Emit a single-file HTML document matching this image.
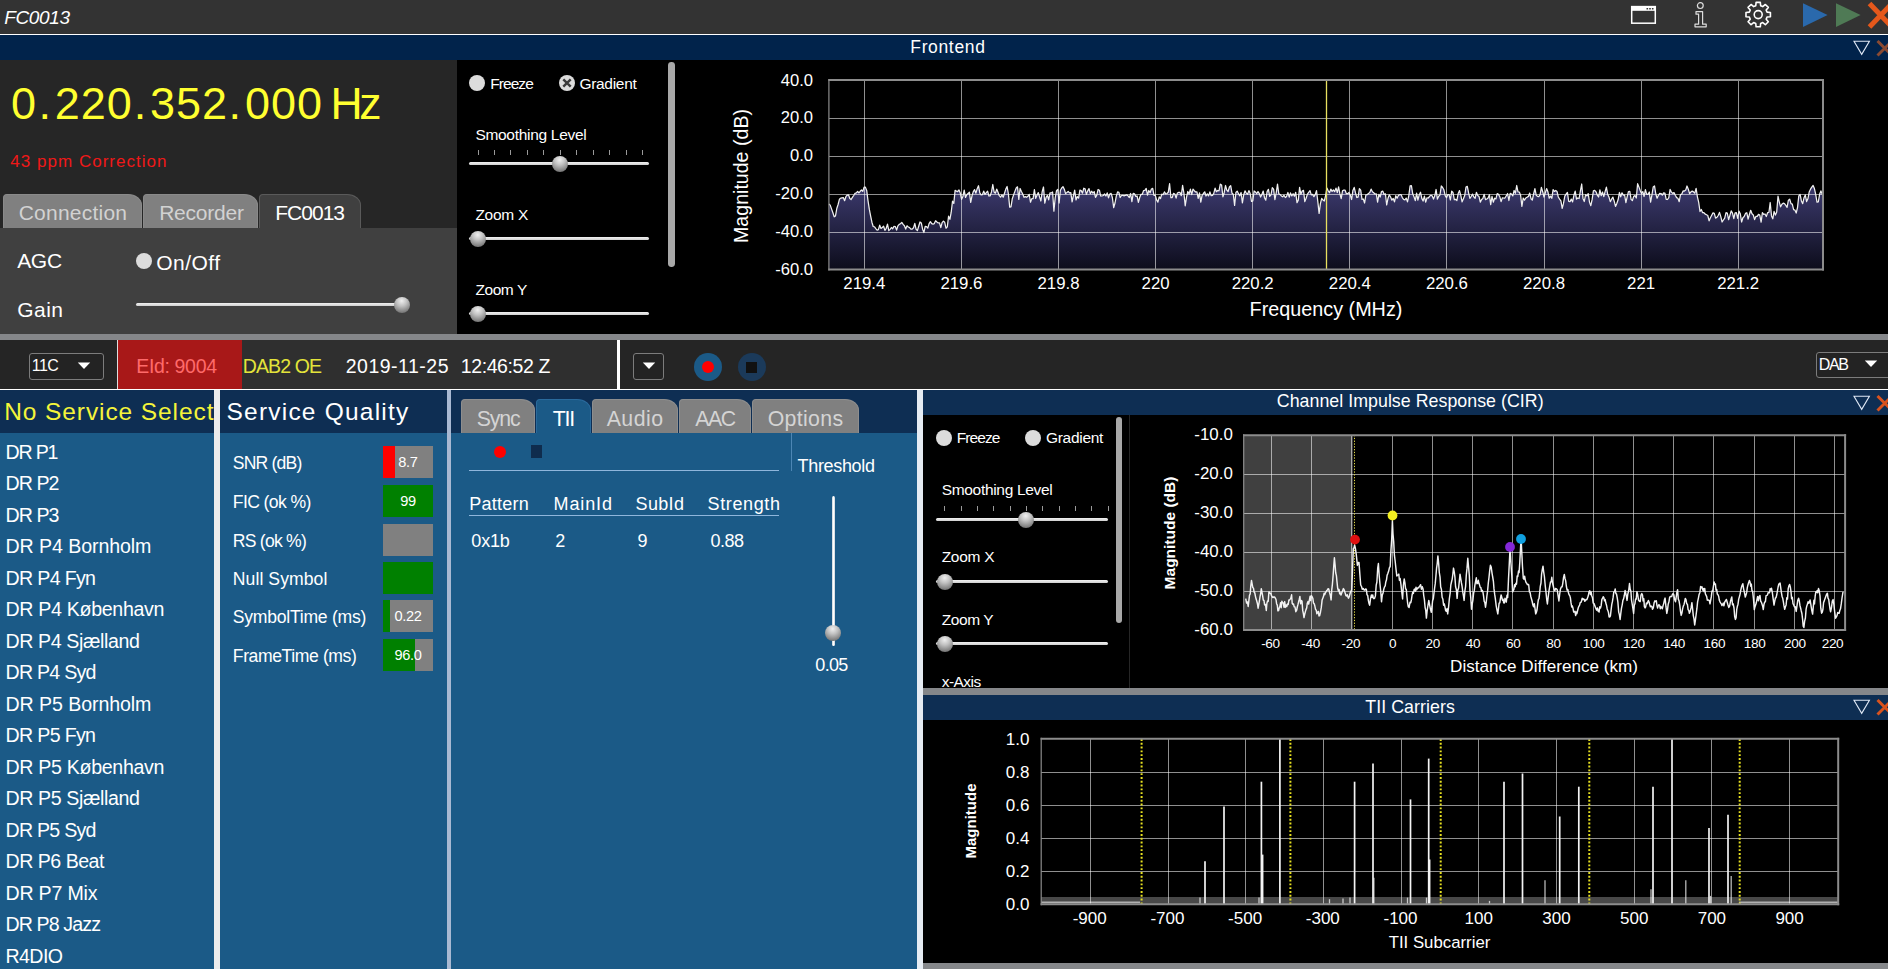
<!DOCTYPE html>
<html lang="en"><head><meta charset="utf-8"><title>FC0013</title><style>
html,body{margin:0;padding:0;background:#000;}
#app{position:relative;width:1888px;height:969px;overflow:hidden;background:#000;font-family:"Liberation Sans", Arial, sans-serif;}
.r{position:absolute;display:block}
.t{position:absolute;white-space:pre;font-family:"Liberation Sans", Arial, sans-serif;}
.th{position:absolute;border-radius:50%;background:radial-gradient(circle at 48% 24%,#efefef 0%,#c2c2c2 35%,#808080 75%,#585858 100%);}
.rd{position:absolute;border-radius:50%;background:#dcdcdc;}
</style></head><body><div id="app">
<div class="r" style="left:0px;top:0px;width:1888px;height:34px;background:#333;"></div>
<div class="r" style="left:0px;top:33.5px;width:1888px;height:1.5px;background:#fff;"></div>
<div class="t" style="left:4.24px;top:7.00px;font-size:19.00px;line-height:21px;color:#fff;letter-spacing:-0.377px;font-style:italic;">FC0013</div>
<svg class="r" style="left:1625px;top:0" width="263" height="34" viewBox="1625 0 263 34">
<rect x="1631.7" y="6.6" width="23.6" height="16.6" fill="none" stroke="#fff" stroke-width="1.5"/>
<rect x="1631.7" y="6.6" width="23.6" height="4.2" fill="#fff"/>
<rect x="1646.5" y="8" width="1.6" height="1.5" fill="#333"/><rect x="1649.2" y="8" width="1.6" height="1.5" fill="#333"/><rect x="1651.9" y="8" width="1.6" height="1.5" fill="#333"/>
<circle cx="1700.3" cy="5.6" r="2.9" fill="none" stroke="#ddd" stroke-width="1.2"/>
<path d="M1696 11.6h6.6v12.6h3.6v2.6h-11.2v-2.6h3.6v-10h-2.6z" fill="none" stroke="#ddd" stroke-width="1.2" stroke-linejoin="round"/>
<g transform="translate(1758.2 14.6)" fill="none" stroke="#fff" stroke-width="1.6" stroke-linejoin="round">
<path d="M8.87 -2.45L12.22 -2.10L12.22 2.10L8.87 2.45L8.00 4.53L10.13 7.16L7.16 10.13L4.53 8.00L2.45 8.87L2.10 12.22L-2.10 12.22L-2.45 8.87L-4.53 8.00L-7.16 10.13L-10.13 7.16L-8.00 4.53L-8.87 2.45L-12.22 2.10L-12.22 -2.10L-8.87 -2.45L-8.00 -4.53L-10.13 -7.16L-7.16 -10.13L-4.53 -8.00L-2.45 -8.87L-2.10 -12.22L2.10 -12.22L2.45 -8.87L4.53 -8.00L7.16 -10.13L10.13 -7.16L8.00 -4.53Z"/><circle r="4"/></g>
<path d="M1803 3.2L1827.6 15L1803 27z" fill="#2a69ac"/>
<path d="M1836 3.2L1860.6 15L1836 27z" fill="#4f7a55"/>
<path d="M1869.5 3.5L1892 27M1892 3.5L1869.5 27" stroke="#e5581b" stroke-width="5" fill="none"/>
</svg>
<div class="r" style="left:0px;top:35px;width:1888px;height:25px;background:#01234b;"></div>
<div class="t" style="left:910.30px;top:37.00px;font-size:17.50px;line-height:20px;color:#fff;letter-spacing:0.647px;">Frontend</div>
<svg class="r" style="left:1850px;top:39.6px" width="38" height="20" viewBox="0 0 38 20"><path d="M4 1.2H19.4L11.7 14.4Z" fill="none" stroke="#dfe8f5" stroke-width="1.1"/><path d="M27.5 1L42 15.5M42 1L27.5 15.5" stroke="#8a4a32" stroke-width="3" fill="none"/></svg>
<div class="r" style="left:0px;top:60px;width:457px;height:167.5px;background:#262626;"></div>
<div class="r" style="left:0px;top:227.5px;width:457px;height:106px;background:#404040;"></div>
<div class="t" style="left:11.10px;top:78.00px;font-size:45.00px;line-height:51px;color:#ffff30;letter-spacing:0.972px;">0</div>
<div class="t" style="left:38.50px;top:78.00px;font-size:45.00px;line-height:51px;color:#ffff30;letter-spacing:0.000px;">.</div>
<div class="t" style="left:54.70px;top:78.00px;font-size:45.00px;line-height:51px;color:#ffff30;letter-spacing:0.972px;">220</div>
<div class="t" style="left:133.80px;top:78.00px;font-size:45.00px;line-height:51px;color:#ffff30;letter-spacing:0.000px;">.</div>
<div class="t" style="left:150.00px;top:78.00px;font-size:45.00px;line-height:51px;color:#ffff30;letter-spacing:0.972px;">352</div>
<div class="t" style="left:228.50px;top:78.00px;font-size:45.00px;line-height:51px;color:#ffff30;letter-spacing:0.000px;">.</div>
<div class="t" style="left:245.00px;top:78.00px;font-size:45.00px;line-height:51px;color:#ffff30;letter-spacing:0.972px;">000</div>
<div class="t" style="left:330.42px;top:79.00px;font-size:44.50px;line-height:49px;color:#ffff30;letter-spacing:-3.182px;">Hz</div>
<div class="t" style="left:10.32px;top:152.00px;font-size:17.00px;line-height:19px;color:#f01818;letter-spacing:1.024px;">43 ppm Correction</div>
<div class="r" style="left:3px;top:194px;width:139px;height:33.5px;background:#808080;border-radius:4px 14px 0 0 / 4px 11px 0 0;border:1px solid #8a8a8a;border-bottom:none;box-sizing:border-box"></div>
<div class="t" style="left:18.66px;top:201.00px;font-size:21.00px;line-height:23px;color:#d2d2d2;letter-spacing:0.238px;">Connection</div>
<div class="r" style="left:143px;top:194px;width:115px;height:33.5px;background:#808080;border-radius:4px 14px 0 0 / 4px 11px 0 0;border:1px solid #8a8a8a;border-bottom:none;box-sizing:border-box"></div>
<div class="t" style="left:159.16px;top:201.00px;font-size:21.00px;line-height:23px;color:#d2d2d2;letter-spacing:-0.212px;">Recorder</div>
<div class="r" style="left:259px;top:194px;width:102px;height:34px;background:#404040;border-radius:4px 14px 0 0 / 4px 11px 0 0;border:1px solid #5a5a5a;border-bottom:none;box-sizing:border-box"></div>
<div class="t" style="left:275.16px;top:201.00px;font-size:21.00px;line-height:23px;color:#fff;letter-spacing:-0.964px;">FC0013</div>
<div class="t" style="left:17.16px;top:249.00px;font-size:21.00px;line-height:23px;color:#fff;letter-spacing:-0.309px;">AGC</div>
<div class="rd" style="left:136px;top:252.5px;width:16px;height:16px"></div>
<div class="t" style="left:156.16px;top:251.00px;font-size:21.00px;line-height:23px;color:#fff;letter-spacing:0.484px;">On/Off</div>
<div class="t" style="left:17.16px;top:298.00px;font-size:21.00px;line-height:23px;color:#fff;letter-spacing:0.510px;">Gain</div>
<div class="r" style="left:136px;top:303px;width:266px;height:3px;background:linear-gradient(#f2f2f2,#cfcfcf);border-radius:1.5px;"></div>
<div class="th" style="left:394px;top:297px;width:16px;height:16px"></div>
<div class="r" style="left:457px;top:60px;width:1431px;height:274px;background:#000;"></div>
<div class="rd" style="left:469.4px;top:75px;width:16px;height:16px"></div>
<div class="t" style="left:490.18px;top:75.00px;font-size:15.50px;line-height:17px;color:#fff;letter-spacing:-0.930px;">Freeze</div>
<div class="rd" style="left:558.5px;top:75px;width:16px;height:16px"></div>
<svg class="r" style="left:558.5px;top:75px" width="16" height="16" viewBox="0 0 16 16"><path d="M4.3 4.3L11.7 11.7M11.7 4.3L4.3 11.7" stroke="#3a3a3a" stroke-width="2.4" fill="none"/></svg>
<div class="t" style="left:579.38px;top:75.00px;font-size:15.50px;line-height:17px;color:#fff;letter-spacing:-0.294px;">Gradient</div>
<div class="t" style="left:475.38px;top:126.00px;font-size:15.50px;line-height:17px;color:#fff;letter-spacing:-0.291px;">Smoothing Level</div>
<div class="r" style="left:477.5px;top:150px;width:1px;height:5px;background:#9a9a9a;"></div>
<div class="r" style="left:493.5px;top:150px;width:1px;height:5px;background:#9a9a9a;"></div>
<div class="r" style="left:509.5px;top:150px;width:1px;height:5px;background:#9a9a9a;"></div>
<div class="r" style="left:526.5px;top:150px;width:1px;height:5px;background:#9a9a9a;"></div>
<div class="r" style="left:542.5px;top:150px;width:1px;height:5px;background:#9a9a9a;"></div>
<div class="r" style="left:559.5px;top:150px;width:1px;height:5px;background:#9a9a9a;"></div>
<div class="r" style="left:575.5px;top:150px;width:1px;height:5px;background:#9a9a9a;"></div>
<div class="r" style="left:592.5px;top:150px;width:1px;height:5px;background:#9a9a9a;"></div>
<div class="r" style="left:608.5px;top:150px;width:1px;height:5px;background:#9a9a9a;"></div>
<div class="r" style="left:625.5px;top:150px;width:1px;height:5px;background:#9a9a9a;"></div>
<div class="r" style="left:641.5px;top:150px;width:1px;height:5px;background:#9a9a9a;"></div>
<div class="r" style="left:469px;top:162.3px;width:179.5px;height:3px;background:linear-gradient(#f2f2f2,#cfcfcf);border-radius:1.5px;"></div>
<div class="th" style="left:552px;top:156.3px;width:16px;height:16px"></div>
<div class="t" style="left:475.38px;top:206.00px;font-size:15.50px;line-height:17px;color:#fff;letter-spacing:-0.274px;">Zoom X</div>
<div class="r" style="left:469px;top:237px;width:179.5px;height:3px;background:linear-gradient(#f2f2f2,#cfcfcf);border-radius:1.5px;"></div>
<div class="th" style="left:470px;top:231px;width:16px;height:16px"></div>
<div class="t" style="left:475.38px;top:281.00px;font-size:15.50px;line-height:17px;color:#fff;letter-spacing:-0.418px;">Zoom Y</div>
<div class="r" style="left:469px;top:312.3px;width:179.5px;height:3px;background:linear-gradient(#f2f2f2,#cfcfcf);border-radius:1.5px;"></div>
<div class="th" style="left:470px;top:306.3px;width:16px;height:16px"></div>
<div class="r" style="left:668px;top:61.5px;width:6.7px;height:205.5px;background:#a8a8a8;border-radius:3.4px;"></div>
<svg class="r" style="left:457px;top:60px" width="1431" height="274" viewBox="457 60 1431 274">
<defs><linearGradient id="g1" x1="0" y1="0" x2="0" y2="1"><stop offset="0" stop-color="#3d3b70"/><stop offset="1" stop-color="#0d0d1c"/></linearGradient></defs>
<polygon points="829,269 829.0,203.8 830.3,205.4 831.6,209.1 832.9,212.7 834.2,216.8 835.5,215.9 836.8,208.5 838.1,204.5 839.4,199.3 840.7,198.1 842.0,197.8 843.3,197.6 844.6,200.7 845.9,196.7 847.2,195.1 848.5,194.8 849.8,198.5 851.1,199.5 852.4,197.4 853.7,195.5 855.0,193.3 856.3,192.9 857.6,191.5 858.9,192.8 860.2,191.3 861.5,190.0 862.8,191.4 864.1,187.1 865.4,187.2 866.7,190.4 868.0,200.6 869.3,209.2 870.6,215.8 871.9,222.2 873.2,226.5 874.5,226.8 875.8,228.6 877.1,230.2 878.4,229.6 879.7,225.2 881.0,228.4 882.3,227.5 883.6,226.2 884.9,230.4 886.2,228.3 887.5,224.2 888.8,230.6 890.1,229.4 891.4,227.5 892.7,228.8 894.0,226.4 895.3,226.5 896.6,230.1 897.9,225.9 899.2,224.4 900.5,223.8 901.8,222.4 903.1,224.4 904.4,225.8 905.7,229.1 907.0,225.8 908.3,227.0 909.6,227.6 910.9,229.2 912.2,229.1 913.5,227.8 914.8,223.3 916.1,229.3 917.4,230.6 918.7,226.2 920.0,222.0 921.3,223.0 922.6,229.2 923.9,232.5 925.2,226.4 926.5,226.6 927.8,228.2 929.1,223.7 930.4,221.7 931.7,223.7 933.0,224.2 934.3,223.6 935.6,220.7 936.9,222.0 938.2,222.9 939.5,222.9 940.8,227.6 942.1,222.7 943.4,221.1 944.7,222.3 946.0,228.2 947.3,226.9 948.6,216.2 949.9,219.3 951.2,212.2 952.5,201.2 953.8,203.4 955.1,190.3 956.4,191.2 957.7,191.7 959.0,189.9 960.3,193.0 961.6,199.3 962.9,196.6 964.2,190.1 965.5,197.4 966.8,194.8 968.1,193.5 969.4,192.2 970.7,202.4 972.0,195.8 973.3,191.6 974.6,189.6 975.9,193.2 977.2,188.7 978.5,185.7 979.8,192.9 981.1,194.9 982.4,194.7 983.7,191.1 985.0,194.4 986.3,192.6 987.6,191.2 988.9,196.0 990.2,195.8 991.5,191.9 992.8,184.5 994.1,192.0 995.4,193.2 996.7,189.1 998.0,192.3 999.3,195.7 1000.6,197.2 1001.9,194.9 1003.2,197.2 1004.5,193.2 1005.8,189.1 1007.1,186.5 1008.4,194.0 1009.7,207.1 1011.0,206.9 1012.3,198.7 1013.6,194.9 1014.9,191.4 1016.2,188.0 1017.5,186.8 1018.8,199.4 1020.1,188.5 1021.4,191.4 1022.7,194.1 1024.0,197.3 1025.3,196.6 1026.6,197.3 1027.9,196.3 1029.2,194.3 1030.5,202.2 1031.8,198.6 1033.1,198.6 1034.4,189.6 1035.7,198.3 1037.0,195.3 1038.3,192.6 1039.6,197.0 1040.9,201.0 1042.2,191.7 1043.5,187.0 1044.8,203.2 1046.1,197.3 1047.4,195.4 1048.7,199.8 1050.0,192.9 1051.3,192.9 1052.6,192.0 1053.9,211.1 1055.2,198.0 1056.5,190.8 1057.8,189.4 1059.1,203.0 1060.4,190.3 1061.7,188.0 1063.0,186.6 1064.3,189.2 1065.6,193.6 1066.9,192.6 1068.2,191.5 1069.5,192.9 1070.8,192.6 1072.1,201.8 1073.4,195.7 1074.7,190.1 1076.0,199.9 1077.3,196.6 1078.6,198.1 1079.9,190.1 1081.2,190.6 1082.5,193.2 1083.8,188.2 1085.1,188.8 1086.4,194.3 1087.7,190.9 1089.0,188.6 1090.3,193.6 1091.6,191.2 1092.9,193.2 1094.2,191.6 1095.5,197.3 1096.8,195.2 1098.1,189.5 1099.4,190.2 1100.7,196.0 1102.0,195.9 1103.3,195.5 1104.6,194.0 1105.9,196.0 1107.2,192.9 1108.5,197.9 1109.8,194.0 1111.1,193.4 1112.4,197.8 1113.7,207.6 1115.0,203.0 1116.3,196.1 1117.6,191.9 1118.9,192.3 1120.2,197.5 1121.5,195.5 1122.8,195.3 1124.1,195.9 1125.4,195.3 1126.7,194.8 1128.0,195.8 1129.3,197.5 1130.6,193.5 1131.9,201.6 1133.2,193.3 1134.5,193.9 1135.8,196.4 1137.1,196.0 1138.4,202.3 1139.7,197.5 1141.0,194.3 1142.3,194.3 1143.6,190.5 1144.9,190.4 1146.2,188.4 1147.5,195.2 1148.8,190.5 1150.1,192.8 1151.4,189.0 1152.7,188.4 1154.0,195.3 1155.3,195.4 1156.6,199.9 1157.9,202.1 1159.2,196.9 1160.5,198.5 1161.8,194.1 1163.1,194.7 1164.4,191.9 1165.7,193.9 1167.0,193.5 1168.3,192.2 1169.6,183.7 1170.9,197.6 1172.2,197.6 1173.5,193.4 1174.8,194.0 1176.1,198.1 1177.4,193.0 1178.7,192.4 1180.0,192.4 1181.3,195.7 1182.6,185.4 1183.9,193.0 1185.2,205.8 1186.5,197.4 1187.8,191.5 1189.1,194.0 1190.4,189.2 1191.7,194.6 1193.0,189.1 1194.3,190.7 1195.6,192.0 1196.9,191.8 1198.2,198.4 1199.5,192.8 1200.8,202.1 1202.1,195.3 1203.4,193.5 1204.7,191.8 1206.0,196.0 1207.3,193.9 1208.6,195.9 1209.9,191.9 1211.2,195.7 1212.5,195.3 1213.8,193.4 1215.1,188.1 1216.4,191.7 1217.7,190.5 1219.0,190.9 1220.3,184.2 1221.6,185.1 1222.9,196.8 1224.2,192.7 1225.5,185.5 1226.8,190.1 1228.1,191.5 1229.4,187.0 1230.7,185.6 1232.0,193.2 1233.3,194.3 1234.6,205.4 1235.9,192.5 1237.2,191.1 1238.5,193.7 1239.8,195.8 1241.1,192.5 1242.4,202.8 1243.7,195.0 1245.0,190.9 1246.3,193.1 1247.6,194.3 1248.9,190.6 1250.2,193.6 1251.5,201.3 1252.8,200.8 1254.1,191.0 1255.4,191.9 1256.7,193.7 1258.0,191.5 1259.3,193.6 1260.6,197.0 1261.9,194.4 1263.2,191.1 1264.5,197.7 1265.8,200.1 1267.1,191.6 1268.4,189.4 1269.7,196.3 1271.0,194.8 1272.3,187.7 1273.6,189.2 1274.9,199.7 1276.2,193.0 1277.5,184.2 1278.8,193.9 1280.1,194.5 1281.4,195.9 1282.7,196.8 1284.0,195.2 1285.3,197.5 1286.6,196.4 1287.9,192.5 1289.2,197.2 1290.5,192.9 1291.8,195.9 1293.1,193.7 1294.4,196.2 1295.7,192.3 1297.0,202.6 1298.3,200.1 1299.6,187.4 1300.9,194.3 1302.2,191.1 1303.5,190.3 1304.8,201.6 1306.1,198.3 1307.4,194.2 1308.7,192.4 1310.0,190.6 1311.3,194.9 1312.6,194.4 1313.9,196.7 1315.2,194.6 1316.5,190.6 1317.8,201.4 1319.1,213.4 1320.4,203.7 1321.7,198.4 1323.0,200.1 1324.3,201.0 1325.6,195.6 1326.9,188.1 1328.2,190.8 1329.5,192.7 1330.8,189.1 1332.1,191.4 1333.4,190.0 1334.7,191.6 1336.0,188.1 1337.3,192.5 1338.6,186.8 1339.9,193.9 1341.2,198.7 1342.5,190.8 1343.8,190.1 1345.1,190.2 1346.4,193.7 1347.7,193.7 1349.0,192.4 1350.3,195.1 1351.6,199.5 1352.9,190.4 1354.2,187.4 1355.5,192.9 1356.8,197.5 1358.1,197.1 1359.4,188.6 1360.7,190.2 1362.0,199.3 1363.3,199.0 1364.6,203.0 1365.9,194.8 1367.2,194.7 1368.5,193.4 1369.8,192.5 1371.1,189.1 1372.4,191.8 1373.7,192.8 1375.0,194.0 1376.3,193.9 1377.6,202.2 1378.9,194.3 1380.2,197.0 1381.5,191.5 1382.8,191.1 1384.1,194.5 1385.4,193.8 1386.7,205.0 1388.0,198.3 1389.3,194.8 1390.6,197.0 1391.9,200.2 1393.2,198.5 1394.5,201.8 1395.8,195.7 1397.1,198.3 1398.4,195.4 1399.7,194.7 1401.0,194.6 1402.3,197.6 1403.6,199.3 1404.9,199.8 1406.2,198.1 1407.5,201.9 1408.8,195.6 1410.1,185.9 1411.4,185.6 1412.7,193.8 1414.0,196.8 1415.3,200.6 1416.6,193.2 1417.9,200.2 1419.2,194.9 1420.5,192.2 1421.8,198.4 1423.1,201.0 1424.4,196.1 1425.7,202.1 1427.0,197.8 1428.3,198.0 1429.6,196.3 1430.9,195.3 1432.2,195.9 1433.5,199.1 1434.8,195.8 1436.1,189.5 1437.4,199.1 1438.7,196.3 1440.0,194.9 1441.3,186.0 1442.6,187.5 1443.9,189.8 1445.2,195.6 1446.5,197.7 1447.8,194.6 1449.1,194.7 1450.4,200.0 1451.7,191.2 1453.0,192.5 1454.3,199.6 1455.6,199.3 1456.9,200.5 1458.2,193.4 1459.5,190.6 1460.8,195.4 1462.1,201.8 1463.4,198.8 1464.7,195.5 1466.0,187.1 1467.3,186.3 1468.6,192.9 1469.9,198.4 1471.2,196.5 1472.5,194.1 1473.8,196.9 1475.1,198.3 1476.4,192.3 1477.7,195.4 1479.0,196.4 1480.3,202.2 1481.6,199.5 1482.9,198.4 1484.2,194.3 1485.5,199.6 1486.8,199.0 1488.1,197.9 1489.4,194.7 1490.7,204.6 1492.0,196.4 1493.3,202.2 1494.6,198.2 1495.9,198.9 1497.2,193.6 1498.5,194.4 1499.8,196.7 1501.1,201.6 1502.4,197.8 1503.7,198.0 1505.0,198.0 1506.3,195.7 1507.6,193.5 1508.9,200.5 1510.2,193.4 1511.5,194.0 1512.8,195.9 1514.1,190.5 1515.4,193.3 1516.7,185.5 1518.0,191.8 1519.3,192.0 1520.6,195.3 1521.9,206.4 1523.2,198.0 1524.5,200.1 1525.8,198.0 1527.1,197.2 1528.4,196.4 1529.7,193.1 1531.0,198.7 1532.3,200.1 1533.6,194.0 1534.9,188.6 1536.2,195.2 1537.5,196.3 1538.8,196.7 1540.1,194.7 1541.4,187.4 1542.7,191.7 1544.0,197.0 1545.3,192.7 1546.6,188.6 1547.9,191.8 1549.2,198.2 1550.5,196.1 1551.8,198.3 1553.1,189.7 1554.4,191.4 1555.7,190.4 1557.0,191.4 1558.3,197.0 1559.6,199.1 1560.9,200.9 1562.2,208.3 1563.5,203.4 1564.8,196.2 1566.1,194.1 1567.4,192.4 1568.7,201.4 1570.0,201.6 1571.3,199.1 1572.6,201.9 1573.9,195.3 1575.2,191.2 1576.5,199.1 1577.8,198.0 1579.1,198.5 1580.4,190.8 1581.7,184.0 1583.0,198.4 1584.3,201.5 1585.6,194.7 1586.9,195.9 1588.2,193.6 1589.5,202.1 1590.8,205.7 1592.1,199.7 1593.4,190.9 1594.7,190.3 1596.0,191.8 1597.3,195.1 1598.6,197.0 1599.9,189.8 1601.2,195.7 1602.5,192.0 1603.8,196.6 1605.1,191.7 1606.4,187.1 1607.7,194.5 1609.0,197.1 1610.3,201.6 1611.6,199.2 1612.9,197.1 1614.2,201.2 1615.5,206.4 1616.8,203.5 1618.1,199.8 1619.4,192.5 1620.7,196.8 1622.0,192.8 1623.3,195.1 1624.6,195.0 1625.9,202.7 1627.2,196.6 1628.5,191.5 1629.8,191.3 1631.1,199.5 1632.4,200.5 1633.7,196.4 1635.0,195.6 1636.3,198.0 1637.6,183.7 1638.9,186.9 1640.2,190.5 1641.5,193.4 1642.8,191.6 1644.1,196.5 1645.4,189.7 1646.7,194.4 1648.0,194.4 1649.3,192.0 1650.6,202.1 1651.9,195.1 1653.2,187.0 1654.5,185.9 1655.8,194.0 1657.1,198.2 1658.4,195.3 1659.7,193.4 1661.0,193.5 1662.3,195.2 1663.6,192.9 1664.9,193.1 1666.2,199.3 1667.5,199.5 1668.8,197.7 1670.1,189.4 1671.4,192.1 1672.7,193.4 1674.0,192.6 1675.3,195.2 1676.6,197.6 1677.9,198.2 1679.2,201.7 1680.5,194.6 1681.8,194.1 1683.1,190.9 1684.4,191.1 1685.7,190.1 1687.0,186.0 1688.3,189.2 1689.6,193.6 1690.9,192.0 1692.2,191.1 1693.5,191.9 1694.8,193.2 1696.1,188.3 1697.4,196.8 1698.7,202.3 1700.0,211.5 1701.3,209.5 1702.6,212.7 1703.9,212.7 1705.2,214.1 1706.5,214.8 1707.8,215.5 1709.1,220.8 1710.4,217.7 1711.7,215.3 1713.0,212.9 1714.3,213.4 1715.6,218.1 1716.9,217.3 1718.2,215.5 1719.5,212.4 1720.8,216.6 1722.1,222.0 1723.4,220.0 1724.7,218.1 1726.0,212.7 1727.3,213.2 1728.6,219.7 1729.9,215.4 1731.2,210.8 1732.5,213.1 1733.8,218.7 1735.1,212.8 1736.4,212.7 1737.7,218.3 1739.0,211.2 1740.3,213.8 1741.6,222.0 1742.9,217.7 1744.2,216.5 1745.5,213.4 1746.8,212.7 1748.1,219.1 1749.4,214.5 1750.7,210.3 1752.0,213.8 1753.3,215.0 1754.6,219.6 1755.9,216.4 1757.2,216.3 1758.5,214.4 1759.8,215.1 1761.1,222.2 1762.4,212.6 1763.7,214.3 1765.0,214.0 1766.3,216.5 1767.6,212.7 1768.9,212.5 1770.2,202.5 1771.5,215.9 1772.8,218.8 1774.1,211.4 1775.4,215.1 1776.7,212.1 1778.0,196.2 1779.3,202.1 1780.6,206.8 1781.9,204.3 1783.2,203.2 1784.5,203.7 1785.8,205.4 1787.1,207.3 1788.4,200.2 1789.7,199.2 1791.0,203.6 1792.3,204.1 1793.6,209.7 1794.9,210.1 1796.2,213.0 1797.5,207.6 1798.8,195.9 1800.1,194.4 1801.4,200.9 1802.7,203.7 1804.0,197.8 1805.3,194.9 1806.6,201.6 1807.9,198.8 1809.2,192.0 1810.5,189.2 1811.8,187.2 1813.1,185.5 1814.4,188.6 1815.7,194.4 1817.0,202.1 1818.3,201.8 1819.6,194.3 1820.9,190.9 1823.0,196.1 1823,269" fill="url(#g1)"/>
<path d="M829 118.5H1823 M829 156.5H1823 M829 194.5H1823 M829 232.5H1823 M864.5 80V269 M961.5 80V269 M1058.5 80V269 M1155.5 80V269 M1252.5 80V269 M1349.5 80V269 M1446.5 80V269 M1544.5 80V269 M1641.5 80V269 M1738.5 80V269" stroke="rgba(255,255,255,0.56)" stroke-width="1" fill="none"/>
<polyline points="829.0,203.8 830.3,205.4 831.6,209.1 832.9,212.7 834.2,216.8 835.5,215.9 836.8,208.5 838.1,204.5 839.4,199.3 840.7,198.1 842.0,197.8 843.3,197.6 844.6,200.7 845.9,196.7 847.2,195.1 848.5,194.8 849.8,198.5 851.1,199.5 852.4,197.4 853.7,195.5 855.0,193.3 856.3,192.9 857.6,191.5 858.9,192.8 860.2,191.3 861.5,190.0 862.8,191.4 864.1,187.1 865.4,187.2 866.7,190.4 868.0,200.6 869.3,209.2 870.6,215.8 871.9,222.2 873.2,226.5 874.5,226.8 875.8,228.6 877.1,230.2 878.4,229.6 879.7,225.2 881.0,228.4 882.3,227.5 883.6,226.2 884.9,230.4 886.2,228.3 887.5,224.2 888.8,230.6 890.1,229.4 891.4,227.5 892.7,228.8 894.0,226.4 895.3,226.5 896.6,230.1 897.9,225.9 899.2,224.4 900.5,223.8 901.8,222.4 903.1,224.4 904.4,225.8 905.7,229.1 907.0,225.8 908.3,227.0 909.6,227.6 910.9,229.2 912.2,229.1 913.5,227.8 914.8,223.3 916.1,229.3 917.4,230.6 918.7,226.2 920.0,222.0 921.3,223.0 922.6,229.2 923.9,232.5 925.2,226.4 926.5,226.6 927.8,228.2 929.1,223.7 930.4,221.7 931.7,223.7 933.0,224.2 934.3,223.6 935.6,220.7 936.9,222.0 938.2,222.9 939.5,222.9 940.8,227.6 942.1,222.7 943.4,221.1 944.7,222.3 946.0,228.2 947.3,226.9 948.6,216.2 949.9,219.3 951.2,212.2 952.5,201.2 953.8,203.4 955.1,190.3 956.4,191.2 957.7,191.7 959.0,189.9 960.3,193.0 961.6,199.3 962.9,196.6 964.2,190.1 965.5,197.4 966.8,194.8 968.1,193.5 969.4,192.2 970.7,202.4 972.0,195.8 973.3,191.6 974.6,189.6 975.9,193.2 977.2,188.7 978.5,185.7 979.8,192.9 981.1,194.9 982.4,194.7 983.7,191.1 985.0,194.4 986.3,192.6 987.6,191.2 988.9,196.0 990.2,195.8 991.5,191.9 992.8,184.5 994.1,192.0 995.4,193.2 996.7,189.1 998.0,192.3 999.3,195.7 1000.6,197.2 1001.9,194.9 1003.2,197.2 1004.5,193.2 1005.8,189.1 1007.1,186.5 1008.4,194.0 1009.7,207.1 1011.0,206.9 1012.3,198.7 1013.6,194.9 1014.9,191.4 1016.2,188.0 1017.5,186.8 1018.8,199.4 1020.1,188.5 1021.4,191.4 1022.7,194.1 1024.0,197.3 1025.3,196.6 1026.6,197.3 1027.9,196.3 1029.2,194.3 1030.5,202.2 1031.8,198.6 1033.1,198.6 1034.4,189.6 1035.7,198.3 1037.0,195.3 1038.3,192.6 1039.6,197.0 1040.9,201.0 1042.2,191.7 1043.5,187.0 1044.8,203.2 1046.1,197.3 1047.4,195.4 1048.7,199.8 1050.0,192.9 1051.3,192.9 1052.6,192.0 1053.9,211.1 1055.2,198.0 1056.5,190.8 1057.8,189.4 1059.1,203.0 1060.4,190.3 1061.7,188.0 1063.0,186.6 1064.3,189.2 1065.6,193.6 1066.9,192.6 1068.2,191.5 1069.5,192.9 1070.8,192.6 1072.1,201.8 1073.4,195.7 1074.7,190.1 1076.0,199.9 1077.3,196.6 1078.6,198.1 1079.9,190.1 1081.2,190.6 1082.5,193.2 1083.8,188.2 1085.1,188.8 1086.4,194.3 1087.7,190.9 1089.0,188.6 1090.3,193.6 1091.6,191.2 1092.9,193.2 1094.2,191.6 1095.5,197.3 1096.8,195.2 1098.1,189.5 1099.4,190.2 1100.7,196.0 1102.0,195.9 1103.3,195.5 1104.6,194.0 1105.9,196.0 1107.2,192.9 1108.5,197.9 1109.8,194.0 1111.1,193.4 1112.4,197.8 1113.7,207.6 1115.0,203.0 1116.3,196.1 1117.6,191.9 1118.9,192.3 1120.2,197.5 1121.5,195.5 1122.8,195.3 1124.1,195.9 1125.4,195.3 1126.7,194.8 1128.0,195.8 1129.3,197.5 1130.6,193.5 1131.9,201.6 1133.2,193.3 1134.5,193.9 1135.8,196.4 1137.1,196.0 1138.4,202.3 1139.7,197.5 1141.0,194.3 1142.3,194.3 1143.6,190.5 1144.9,190.4 1146.2,188.4 1147.5,195.2 1148.8,190.5 1150.1,192.8 1151.4,189.0 1152.7,188.4 1154.0,195.3 1155.3,195.4 1156.6,199.9 1157.9,202.1 1159.2,196.9 1160.5,198.5 1161.8,194.1 1163.1,194.7 1164.4,191.9 1165.7,193.9 1167.0,193.5 1168.3,192.2 1169.6,183.7 1170.9,197.6 1172.2,197.6 1173.5,193.4 1174.8,194.0 1176.1,198.1 1177.4,193.0 1178.7,192.4 1180.0,192.4 1181.3,195.7 1182.6,185.4 1183.9,193.0 1185.2,205.8 1186.5,197.4 1187.8,191.5 1189.1,194.0 1190.4,189.2 1191.7,194.6 1193.0,189.1 1194.3,190.7 1195.6,192.0 1196.9,191.8 1198.2,198.4 1199.5,192.8 1200.8,202.1 1202.1,195.3 1203.4,193.5 1204.7,191.8 1206.0,196.0 1207.3,193.9 1208.6,195.9 1209.9,191.9 1211.2,195.7 1212.5,195.3 1213.8,193.4 1215.1,188.1 1216.4,191.7 1217.7,190.5 1219.0,190.9 1220.3,184.2 1221.6,185.1 1222.9,196.8 1224.2,192.7 1225.5,185.5 1226.8,190.1 1228.1,191.5 1229.4,187.0 1230.7,185.6 1232.0,193.2 1233.3,194.3 1234.6,205.4 1235.9,192.5 1237.2,191.1 1238.5,193.7 1239.8,195.8 1241.1,192.5 1242.4,202.8 1243.7,195.0 1245.0,190.9 1246.3,193.1 1247.6,194.3 1248.9,190.6 1250.2,193.6 1251.5,201.3 1252.8,200.8 1254.1,191.0 1255.4,191.9 1256.7,193.7 1258.0,191.5 1259.3,193.6 1260.6,197.0 1261.9,194.4 1263.2,191.1 1264.5,197.7 1265.8,200.1 1267.1,191.6 1268.4,189.4 1269.7,196.3 1271.0,194.8 1272.3,187.7 1273.6,189.2 1274.9,199.7 1276.2,193.0 1277.5,184.2 1278.8,193.9 1280.1,194.5 1281.4,195.9 1282.7,196.8 1284.0,195.2 1285.3,197.5 1286.6,196.4 1287.9,192.5 1289.2,197.2 1290.5,192.9 1291.8,195.9 1293.1,193.7 1294.4,196.2 1295.7,192.3 1297.0,202.6 1298.3,200.1 1299.6,187.4 1300.9,194.3 1302.2,191.1 1303.5,190.3 1304.8,201.6 1306.1,198.3 1307.4,194.2 1308.7,192.4 1310.0,190.6 1311.3,194.9 1312.6,194.4 1313.9,196.7 1315.2,194.6 1316.5,190.6 1317.8,201.4 1319.1,213.4 1320.4,203.7 1321.7,198.4 1323.0,200.1 1324.3,201.0 1325.6,195.6 1326.9,188.1 1328.2,190.8 1329.5,192.7 1330.8,189.1 1332.1,191.4 1333.4,190.0 1334.7,191.6 1336.0,188.1 1337.3,192.5 1338.6,186.8 1339.9,193.9 1341.2,198.7 1342.5,190.8 1343.8,190.1 1345.1,190.2 1346.4,193.7 1347.7,193.7 1349.0,192.4 1350.3,195.1 1351.6,199.5 1352.9,190.4 1354.2,187.4 1355.5,192.9 1356.8,197.5 1358.1,197.1 1359.4,188.6 1360.7,190.2 1362.0,199.3 1363.3,199.0 1364.6,203.0 1365.9,194.8 1367.2,194.7 1368.5,193.4 1369.8,192.5 1371.1,189.1 1372.4,191.8 1373.7,192.8 1375.0,194.0 1376.3,193.9 1377.6,202.2 1378.9,194.3 1380.2,197.0 1381.5,191.5 1382.8,191.1 1384.1,194.5 1385.4,193.8 1386.7,205.0 1388.0,198.3 1389.3,194.8 1390.6,197.0 1391.9,200.2 1393.2,198.5 1394.5,201.8 1395.8,195.7 1397.1,198.3 1398.4,195.4 1399.7,194.7 1401.0,194.6 1402.3,197.6 1403.6,199.3 1404.9,199.8 1406.2,198.1 1407.5,201.9 1408.8,195.6 1410.1,185.9 1411.4,185.6 1412.7,193.8 1414.0,196.8 1415.3,200.6 1416.6,193.2 1417.9,200.2 1419.2,194.9 1420.5,192.2 1421.8,198.4 1423.1,201.0 1424.4,196.1 1425.7,202.1 1427.0,197.8 1428.3,198.0 1429.6,196.3 1430.9,195.3 1432.2,195.9 1433.5,199.1 1434.8,195.8 1436.1,189.5 1437.4,199.1 1438.7,196.3 1440.0,194.9 1441.3,186.0 1442.6,187.5 1443.9,189.8 1445.2,195.6 1446.5,197.7 1447.8,194.6 1449.1,194.7 1450.4,200.0 1451.7,191.2 1453.0,192.5 1454.3,199.6 1455.6,199.3 1456.9,200.5 1458.2,193.4 1459.5,190.6 1460.8,195.4 1462.1,201.8 1463.4,198.8 1464.7,195.5 1466.0,187.1 1467.3,186.3 1468.6,192.9 1469.9,198.4 1471.2,196.5 1472.5,194.1 1473.8,196.9 1475.1,198.3 1476.4,192.3 1477.7,195.4 1479.0,196.4 1480.3,202.2 1481.6,199.5 1482.9,198.4 1484.2,194.3 1485.5,199.6 1486.8,199.0 1488.1,197.9 1489.4,194.7 1490.7,204.6 1492.0,196.4 1493.3,202.2 1494.6,198.2 1495.9,198.9 1497.2,193.6 1498.5,194.4 1499.8,196.7 1501.1,201.6 1502.4,197.8 1503.7,198.0 1505.0,198.0 1506.3,195.7 1507.6,193.5 1508.9,200.5 1510.2,193.4 1511.5,194.0 1512.8,195.9 1514.1,190.5 1515.4,193.3 1516.7,185.5 1518.0,191.8 1519.3,192.0 1520.6,195.3 1521.9,206.4 1523.2,198.0 1524.5,200.1 1525.8,198.0 1527.1,197.2 1528.4,196.4 1529.7,193.1 1531.0,198.7 1532.3,200.1 1533.6,194.0 1534.9,188.6 1536.2,195.2 1537.5,196.3 1538.8,196.7 1540.1,194.7 1541.4,187.4 1542.7,191.7 1544.0,197.0 1545.3,192.7 1546.6,188.6 1547.9,191.8 1549.2,198.2 1550.5,196.1 1551.8,198.3 1553.1,189.7 1554.4,191.4 1555.7,190.4 1557.0,191.4 1558.3,197.0 1559.6,199.1 1560.9,200.9 1562.2,208.3 1563.5,203.4 1564.8,196.2 1566.1,194.1 1567.4,192.4 1568.7,201.4 1570.0,201.6 1571.3,199.1 1572.6,201.9 1573.9,195.3 1575.2,191.2 1576.5,199.1 1577.8,198.0 1579.1,198.5 1580.4,190.8 1581.7,184.0 1583.0,198.4 1584.3,201.5 1585.6,194.7 1586.9,195.9 1588.2,193.6 1589.5,202.1 1590.8,205.7 1592.1,199.7 1593.4,190.9 1594.7,190.3 1596.0,191.8 1597.3,195.1 1598.6,197.0 1599.9,189.8 1601.2,195.7 1602.5,192.0 1603.8,196.6 1605.1,191.7 1606.4,187.1 1607.7,194.5 1609.0,197.1 1610.3,201.6 1611.6,199.2 1612.9,197.1 1614.2,201.2 1615.5,206.4 1616.8,203.5 1618.1,199.8 1619.4,192.5 1620.7,196.8 1622.0,192.8 1623.3,195.1 1624.6,195.0 1625.9,202.7 1627.2,196.6 1628.5,191.5 1629.8,191.3 1631.1,199.5 1632.4,200.5 1633.7,196.4 1635.0,195.6 1636.3,198.0 1637.6,183.7 1638.9,186.9 1640.2,190.5 1641.5,193.4 1642.8,191.6 1644.1,196.5 1645.4,189.7 1646.7,194.4 1648.0,194.4 1649.3,192.0 1650.6,202.1 1651.9,195.1 1653.2,187.0 1654.5,185.9 1655.8,194.0 1657.1,198.2 1658.4,195.3 1659.7,193.4 1661.0,193.5 1662.3,195.2 1663.6,192.9 1664.9,193.1 1666.2,199.3 1667.5,199.5 1668.8,197.7 1670.1,189.4 1671.4,192.1 1672.7,193.4 1674.0,192.6 1675.3,195.2 1676.6,197.6 1677.9,198.2 1679.2,201.7 1680.5,194.6 1681.8,194.1 1683.1,190.9 1684.4,191.1 1685.7,190.1 1687.0,186.0 1688.3,189.2 1689.6,193.6 1690.9,192.0 1692.2,191.1 1693.5,191.9 1694.8,193.2 1696.1,188.3 1697.4,196.8 1698.7,202.3 1700.0,211.5 1701.3,209.5 1702.6,212.7 1703.9,212.7 1705.2,214.1 1706.5,214.8 1707.8,215.5 1709.1,220.8 1710.4,217.7 1711.7,215.3 1713.0,212.9 1714.3,213.4 1715.6,218.1 1716.9,217.3 1718.2,215.5 1719.5,212.4 1720.8,216.6 1722.1,222.0 1723.4,220.0 1724.7,218.1 1726.0,212.7 1727.3,213.2 1728.6,219.7 1729.9,215.4 1731.2,210.8 1732.5,213.1 1733.8,218.7 1735.1,212.8 1736.4,212.7 1737.7,218.3 1739.0,211.2 1740.3,213.8 1741.6,222.0 1742.9,217.7 1744.2,216.5 1745.5,213.4 1746.8,212.7 1748.1,219.1 1749.4,214.5 1750.7,210.3 1752.0,213.8 1753.3,215.0 1754.6,219.6 1755.9,216.4 1757.2,216.3 1758.5,214.4 1759.8,215.1 1761.1,222.2 1762.4,212.6 1763.7,214.3 1765.0,214.0 1766.3,216.5 1767.6,212.7 1768.9,212.5 1770.2,202.5 1771.5,215.9 1772.8,218.8 1774.1,211.4 1775.4,215.1 1776.7,212.1 1778.0,196.2 1779.3,202.1 1780.6,206.8 1781.9,204.3 1783.2,203.2 1784.5,203.7 1785.8,205.4 1787.1,207.3 1788.4,200.2 1789.7,199.2 1791.0,203.6 1792.3,204.1 1793.6,209.7 1794.9,210.1 1796.2,213.0 1797.5,207.6 1798.8,195.9 1800.1,194.4 1801.4,200.9 1802.7,203.7 1804.0,197.8 1805.3,194.9 1806.6,201.6 1807.9,198.8 1809.2,192.0 1810.5,189.2 1811.8,187.2 1813.1,185.5 1814.4,188.6 1815.7,194.4 1817.0,202.1 1818.3,201.8 1819.6,194.3 1820.9,190.9 1823.0,196.1" fill="none" stroke="#f0f0f0" stroke-width="1.25" stroke-linejoin="round"/>
<path d="M1326.5 80V269" stroke="#e8e060" stroke-width="1.3"/>
<path d="M828.3 80H1824" stroke="#8c8c8c" stroke-width="2"/>
<path d="M828.3 269.5H1824" stroke="#8c8c8c" stroke-width="2"/>
<path d="M828.9 79V270.5" stroke="#8c8c8c" stroke-width="1.2"/>
<path d="M1823 79V270.5" stroke="#8c8c8c" stroke-width="2"/>
</svg>
<div class="t" style="right:1075.00px;top:71.00px;font-size:16.60px;line-height:19px;color:#fff;letter-spacing:0.000px;">40.0</div>
<div class="t" style="right:1075.00px;top:108.00px;font-size:16.60px;line-height:19px;color:#fff;letter-spacing:0.000px;">20.0</div>
<div class="t" style="right:1075.00px;top:146.00px;font-size:16.60px;line-height:19px;color:#fff;letter-spacing:0.000px;">0.0</div>
<div class="t" style="right:1075.00px;top:184.00px;font-size:16.60px;line-height:19px;color:#fff;letter-spacing:0.000px;">-20.0</div>
<div class="t" style="right:1075.00px;top:222.00px;font-size:16.60px;line-height:19px;color:#fff;letter-spacing:0.000px;">-40.0</div>
<div class="t" style="right:1075.00px;top:260.00px;font-size:16.60px;line-height:19px;color:#fff;letter-spacing:0.000px;">-60.0</div>
<div class="t" style="left:864.30px;width:400px;margin-left:-200px;text-align:center;top:274.00px;font-size:16.80px;line-height:19px;color:#fff;letter-spacing:0.000px;">219.4</div>
<div class="t" style="left:961.40px;width:400px;margin-left:-200px;text-align:center;top:274.00px;font-size:16.80px;line-height:19px;color:#fff;letter-spacing:0.000px;">219.6</div>
<div class="t" style="left:1058.50px;width:400px;margin-left:-200px;text-align:center;top:274.00px;font-size:16.80px;line-height:19px;color:#fff;letter-spacing:0.000px;">219.8</div>
<div class="t" style="left:1155.60px;width:400px;margin-left:-200px;text-align:center;top:274.00px;font-size:16.80px;line-height:19px;color:#fff;letter-spacing:0.000px;">220</div>
<div class="t" style="left:1252.70px;width:400px;margin-left:-200px;text-align:center;top:274.00px;font-size:16.80px;line-height:19px;color:#fff;letter-spacing:0.000px;">220.2</div>
<div class="t" style="left:1349.80px;width:400px;margin-left:-200px;text-align:center;top:274.00px;font-size:16.80px;line-height:19px;color:#fff;letter-spacing:0.000px;">220.4</div>
<div class="t" style="left:1446.90px;width:400px;margin-left:-200px;text-align:center;top:274.00px;font-size:16.80px;line-height:19px;color:#fff;letter-spacing:0.000px;">220.6</div>
<div class="t" style="left:1544.00px;width:400px;margin-left:-200px;text-align:center;top:274.00px;font-size:16.80px;line-height:19px;color:#fff;letter-spacing:0.000px;">220.8</div>
<div class="t" style="left:1641.10px;width:400px;margin-left:-200px;text-align:center;top:274.00px;font-size:16.80px;line-height:19px;color:#fff;letter-spacing:0.000px;">221</div>
<div class="t" style="left:1738.20px;width:400px;margin-left:-200px;text-align:center;top:274.00px;font-size:16.80px;line-height:19px;color:#fff;letter-spacing:0.000px;">221.2</div>
<div class="t" style="left:1326.00px;width:400px;margin-left:-200px;text-align:center;top:298.00px;font-size:19.80px;line-height:22px;color:#fff;letter-spacing:0.000px;">Frequency (MHz)</div>
<div class="t" style="left:741px;top:176px;width:200px;margin-left:-100px;margin-top:-12px;height:24px;line-height:24px;text-align:center;font-size:19.6px;color:#fff;transform:rotate(-90deg)">Magnitude (dB)</div>
<div class="r" style="left:0px;top:333.5px;width:1888px;height:6.7px;background:#85878a;"></div>
<div class="r" style="left:0px;top:340px;width:1888px;height:49px;background:#252525;"></div>
<div class="r" style="left:242px;top:340px;width:375.5px;height:49px;background:#2f2f2f;"></div>
<div class="r" style="left:117px;top:340px;width:1.2px;height:49px;background:#ddd;"></div>
<div class="r" style="left:118px;top:340px;width:124px;height:49px;background:#a81818;"></div>
<div class="r" style="left:617.3px;top:340px;width:3px;height:49px;background:#fff;"></div>
<div class="r" style="left:0px;top:388.6px;width:1888px;height:1.4px;background:#fff;"></div>
<div class="r" style="left:29px;top:353px;width:75px;height:27px;border:1px solid #7c7c7c;border-radius:3px;box-sizing:border-box;background:#232323"></div>
<div class="t" style="left:31.86px;top:357.00px;font-size:16.00px;line-height:17px;color:#fff;letter-spacing:-0.612px;">11C</div>
<svg class="r" style="left:76.5px;top:361.6px" width="14" height="8" viewBox="0 0 14 8"><path d="M0.8 0.4H13.2L7 7Z" fill="#fff"/></svg>
<div class="t" style="left:136.22px;top:355.00px;font-size:19.50px;line-height:22px;color:#ff6a6a;letter-spacing:-0.341px;">EId: 9004</div>
<div class="t" style="left:242.72px;top:355.00px;font-size:19.50px;line-height:22px;color:#e4e43a;letter-spacing:-0.880px;">DAB2 OE</div>
<div class="t" style="left:345.72px;top:355.00px;font-size:19.50px;line-height:22px;color:#fff;letter-spacing:0.495px;">2019-11-25</div>
<div class="t" style="left:460.72px;top:355.00px;font-size:19.50px;line-height:22px;color:#fff;letter-spacing:-0.387px;">12:46:52 Z</div>
<div class="r" style="left:633px;top:353px;width:31px;height:27px;border:1px solid #7c7c7c;border-radius:3px;box-sizing:border-box;background:#232323"></div>
<svg class="r" style="left:641.5px;top:361.6px" width="14" height="8" viewBox="0 0 14 8"><path d="M0.8 0.4H13.2L7 7Z" fill="#fff"/></svg>
<div class="r" style="left:694px;top:353px;width:28px;height:28px;background:#1b5a87;border-radius:50%;"></div>
<div class="r" style="left:702px;top:361px;width:12px;height:12px;background:#ff0000;border-radius:50%;"></div>
<div class="r" style="left:737.5px;top:353px;width:28px;height:28px;background:#1b3a5a;border-radius:50%;"></div>
<div class="r" style="left:746px;top:361.5px;width:11px;height:11px;background:#111;"></div>
<div class="r" style="left:1816px;top:351.5px;width:80px;height:26.5px;border:1px solid #7c7c7c;border-radius:3px;box-sizing:border-box;background:#232323"></div>
<div class="t" style="left:1818.86px;top:356.00px;font-size:16.00px;line-height:17px;color:#fff;letter-spacing:-1.480px;">DAB</div>
<svg class="r" style="left:1863.5px;top:359.85px" width="14" height="8" viewBox="0 0 14 8"><path d="M0.8 0.4H13.2L7 7Z" fill="#fff"/></svg>
<div class="r" style="left:0px;top:390px;width:214px;height:579px;background:#1b5a87;"></div>
<div class="r" style="left:0px;top:390px;width:214px;height:42.5px;background:#0e2e53;"></div>
<div class="r" style="left:214px;top:390px;width:6.8px;height:579px;background:#ececec;"></div>
<div class="r" style="left:220px;top:390px;width:226.5px;height:579px;background:#1b5a87;"></div>
<div class="r" style="left:220px;top:390px;width:226.5px;height:42.5px;background:#0e2e53;"></div>
<div class="r" style="left:446.5px;top:390px;width:4.8px;height:579px;background:#a9b9d2;"></div>
<div class="r" style="left:451.3px;top:390px;width:466px;height:579px;background:#1b5a87;"></div>
<div class="r" style="left:451.3px;top:390px;width:466px;height:42.5px;background:#0e2e53;"></div>
<div class="r" style="left:917px;top:389.8px;width:6.3px;height:579.2px;background:#e6ecf3;"></div>
<div class="r" style="left:0;top:390px;width:213.5px;height:42px;overflow:hidden">
<div class="t" style="left:4.2px;top:8px;font-size:24.5px;line-height:27px;color:#f4f43a;letter-spacing:0.911px">No Service Selected</div>
</div>
<div class="t" style="left:226.52px;top:398.00px;font-size:24.50px;line-height:27px;color:#fff;letter-spacing:1.211px;">Service Quality</div>
<div class="t" style="left:5.52px;top:441.00px;font-size:19.60px;line-height:22px;color:#fff;letter-spacing:-1.191px;">DR P1</div>
<div class="t" style="left:5.52px;top:472.00px;font-size:19.60px;line-height:22px;color:#fff;letter-spacing:-0.941px;">DR P2</div>
<div class="t" style="left:5.52px;top:504.00px;font-size:19.60px;line-height:22px;color:#fff;letter-spacing:-0.941px;">DR P3</div>
<div class="t" style="left:5.52px;top:535.00px;font-size:19.60px;line-height:22px;color:#fff;letter-spacing:-0.085px;">DR P4 Bornholm</div>
<div class="t" style="left:5.52px;top:567.00px;font-size:19.60px;line-height:22px;color:#fff;letter-spacing:-0.673px;">DR P4 Fyn</div>
<div class="t" style="left:5.52px;top:598.00px;font-size:19.60px;line-height:22px;color:#fff;letter-spacing:-0.319px;">DR P4 København</div>
<div class="t" style="left:5.52px;top:630.00px;font-size:19.60px;line-height:22px;color:#fff;letter-spacing:-0.383px;">DR P4 Sjælland</div>
<div class="t" style="left:5.52px;top:661.00px;font-size:19.60px;line-height:22px;color:#fff;letter-spacing:-0.748px;">DR P4 Syd</div>
<div class="t" style="left:5.52px;top:693.00px;font-size:19.60px;line-height:22px;color:#fff;letter-spacing:-0.085px;">DR P5 Bornholm</div>
<div class="t" style="left:5.52px;top:724.00px;font-size:19.60px;line-height:22px;color:#fff;letter-spacing:-0.673px;">DR P5 Fyn</div>
<div class="t" style="left:5.52px;top:756.00px;font-size:19.60px;line-height:22px;color:#fff;letter-spacing:-0.319px;">DR P5 København</div>
<div class="t" style="left:5.52px;top:787.00px;font-size:19.60px;line-height:22px;color:#fff;letter-spacing:-0.383px;">DR P5 Sjælland</div>
<div class="t" style="left:5.52px;top:819.00px;font-size:19.60px;line-height:22px;color:#fff;letter-spacing:-0.748px;">DR P5 Syd</div>
<div class="t" style="left:5.52px;top:850.00px;font-size:19.60px;line-height:22px;color:#fff;letter-spacing:-0.504px;">DR P6 Beat</div>
<div class="t" style="left:5.52px;top:882.00px;font-size:19.60px;line-height:22px;color:#fff;letter-spacing:-0.212px;">DR P7 Mix</div>
<div class="t" style="left:5.52px;top:913.00px;font-size:19.60px;line-height:22px;color:#fff;letter-spacing:-0.890px;">DR P8 Jazz</div>
<div class="t" style="left:5.52px;top:945.00px;font-size:19.60px;line-height:22px;color:#fff;letter-spacing:-0.609px;">R4DIO</div>
<div class="t" style="left:232.80px;top:453.00px;font-size:17.60px;line-height:20px;color:#fff;letter-spacing:-0.817px;">SNR (dB)</div>
<div class="r" style="left:383px;top:446px;width:50px;height:31.6px;background:#808080;"></div>
<div class="r" style="left:383px;top:446px;width:12px;height:31.6px;background:#ff0000;"></div>
<div class="t" style="left:408.00px;width:400px;margin-left:-200px;text-align:center;top:454.00px;font-size:14.60px;line-height:16px;color:#fff;letter-spacing:0.000px;letter-spacing:-0.3px;">8.7</div>
<div class="t" style="left:232.80px;top:492.00px;font-size:17.60px;line-height:20px;color:#fff;letter-spacing:-0.612px;">FIC (ok %)</div>
<div class="r" style="left:383px;top:485px;width:50px;height:31.6px;background:#808080;"></div>
<div class="r" style="left:383px;top:485px;width:50px;height:31.6px;background:#008000;"></div>
<div class="t" style="left:408.00px;width:400px;margin-left:-200px;text-align:center;top:493.00px;font-size:14.60px;line-height:16px;color:#fff;letter-spacing:0.000px;letter-spacing:-0.3px;">99</div>
<div class="t" style="left:232.80px;top:531.00px;font-size:17.60px;line-height:20px;color:#fff;letter-spacing:-0.763px;">RS (ok %)</div>
<div class="r" style="left:383px;top:524px;width:50px;height:31.6px;background:#808080;"></div>
<div class="t" style="left:232.80px;top:569.00px;font-size:17.60px;line-height:20px;color:#fff;letter-spacing:0.069px;">Null Symbol</div>
<div class="r" style="left:383px;top:562px;width:50px;height:31.6px;background:#808080;"></div>
<div class="r" style="left:383px;top:562px;width:50px;height:31.6px;background:#008000;"></div>
<div class="t" style="left:232.80px;top:607.00px;font-size:17.60px;line-height:20px;color:#fff;letter-spacing:-0.260px;">SymbolTime (ms)</div>
<div class="r" style="left:383px;top:600px;width:50px;height:31.6px;background:#808080;"></div>
<div class="r" style="left:383px;top:600px;width:6.5px;height:31.6px;background:#008000;"></div>
<div class="t" style="left:408.00px;width:400px;margin-left:-200px;text-align:center;top:608.00px;font-size:14.60px;line-height:16px;color:#fff;letter-spacing:0.000px;letter-spacing:-0.3px;">0.22</div>
<div class="t" style="left:232.80px;top:646.00px;font-size:17.60px;line-height:20px;color:#fff;letter-spacing:-0.408px;">FrameTime (ms)</div>
<div class="r" style="left:383px;top:639px;width:50px;height:31.6px;background:#808080;"></div>
<div class="r" style="left:383px;top:639px;width:32px;height:31.6px;background:#008000;"></div>
<div class="t" style="left:408.00px;width:400px;margin-left:-200px;text-align:center;top:647.00px;font-size:14.60px;line-height:16px;color:#fff;letter-spacing:0.000px;letter-spacing:-0.3px;">96.0</div>
<div class="r" style="left:461px;top:399px;width:74px;height:33.6px;background:#808080;border-radius:4px 14px 0 0 / 4px 11px 0 0;border:1px solid #8e8e8e;border-bottom:none;box-sizing:border-box"></div>
<div class="t" style="left:476.65px;top:407.00px;font-size:21.30px;line-height:24px;color:#d4d4d4;letter-spacing:-1.146px;">Sync</div>
<div class="r" style="left:536px;top:399px;width:54.5px;height:33.6px;background:#1b5a87;border-radius:4px 14px 0 0 / 4px 11px 0 0;border:1px solid #2a6a9c;border-bottom:none;box-sizing:border-box"></div>
<div class="t" style="left:552.65px;top:407.00px;font-size:21.30px;line-height:24px;color:#fff;letter-spacing:-1.215px;">TII</div>
<div class="r" style="left:591.5px;top:399px;width:86.5px;height:33.6px;background:#808080;border-radius:4px 14px 0 0 / 4px 11px 0 0;border:1px solid #8e8e8e;border-bottom:none;box-sizing:border-box"></div>
<div class="t" style="left:606.65px;top:407.00px;font-size:21.30px;line-height:24px;color:#d4d4d4;letter-spacing:0.484px;">Audio</div>
<div class="r" style="left:679px;top:399px;width:72px;height:33.6px;background:#808080;border-radius:4px 14px 0 0 / 4px 11px 0 0;border:1px solid #8e8e8e;border-bottom:none;box-sizing:border-box"></div>
<div class="t" style="left:695.15px;top:407.00px;font-size:21.30px;line-height:24px;color:#d4d4d4;letter-spacing:-1.441px;">AAC</div>
<div class="r" style="left:752px;top:399px;width:107px;height:33.6px;background:#808080;border-radius:4px 14px 0 0 / 4px 11px 0 0;border:1px solid #8e8e8e;border-bottom:none;box-sizing:border-box"></div>
<div class="t" style="left:767.65px;top:407.00px;font-size:21.30px;line-height:24px;color:#d4d4d4;letter-spacing:0.335px;">Options</div>
<div class="r" style="left:494px;top:446px;width:12px;height:12px;background:#ff0000;border-radius:50%;"></div>
<div class="r" style="left:531px;top:445px;width:11px;height:13px;background:#0f2c4d;"></div>
<div class="r" style="left:469px;top:470px;width:310px;height:1.2px;background:#8fb6dc;"></div>
<div class="r" style="left:791px;top:432.5px;width:1px;height:38px;background:#4d86b4;"></div>
<div class="t" style="left:797.58px;top:456.00px;font-size:18.00px;line-height:20px;color:#fff;letter-spacing:-0.341px;">Threshold</div>
<div class="t" style="left:469.28px;top:494.00px;font-size:18.00px;line-height:20px;color:#fff;letter-spacing:0.264px;">Pattern</div>
<div class="t" style="left:553.58px;top:494.00px;font-size:18.00px;line-height:20px;color:#fff;letter-spacing:0.858px;">MainId</div>
<div class="t" style="left:635.58px;top:494.00px;font-size:18.00px;line-height:20px;color:#fff;letter-spacing:0.320px;">SubId</div>
<div class="t" style="left:707.58px;top:494.00px;font-size:18.00px;line-height:20px;color:#fff;letter-spacing:0.610px;">Strength</div>
<div class="r" style="left:469px;top:515px;width:310px;height:1.2px;background:#8fb6dc;"></div>
<div class="t" style="left:471.28px;top:531.00px;font-size:18.00px;line-height:20px;color:#fff;letter-spacing:-0.138px;">0x1b</div>
<div class="t" style="left:555.28px;top:531.00px;font-size:18.00px;line-height:20px;color:#fff;letter-spacing:1.109px;">2</div>
<div class="t" style="left:637.58px;top:531.00px;font-size:18.00px;line-height:20px;color:#fff;letter-spacing:1.309px;">9</div>
<div class="t" style="left:710.58px;top:531.00px;font-size:18.00px;line-height:20px;color:#fff;letter-spacing:-0.571px;">0.88</div>
<div class="r" style="left:831.6px;top:496px;width:3px;height:150px;background:linear-gradient(90deg,#c8d0d8,#fff,#c8d0d8);border-radius:1.5px;"></div>
<div class="th" style="left:825px;top:625px;width:16px;height:16px"></div>
<div class="t" style="left:815.28px;top:655.00px;font-size:18.00px;line-height:20px;color:#fff;letter-spacing:-0.638px;">0.05</div>
<div class="r" style="left:923px;top:390px;width:965px;height:25px;background:#0e2e53;"></div>
<div class="r" style="left:923px;top:415px;width:965px;height:273.5px;background:#000;"></div>
<div class="r" style="left:1129px;top:415px;width:1px;height:273.5px;background:#262626;"></div>
<div class="t" style="left:1276.79px;top:391.00px;font-size:17.80px;line-height:20px;color:#fff;letter-spacing:0.033px;">Channel Impulse Response (CIR)</div>
<svg class="r" style="left:1850px;top:394.6px" width="38" height="20" viewBox="0 0 38 20"><path d="M4 1.2H19.4L11.7 14.4Z" fill="none" stroke="#dfe8f5" stroke-width="1.1"/><path d="M27.5 1L42 15.5M42 1L27.5 15.5" stroke="#d9531e" stroke-width="3" fill="none"/></svg>
<div class="rd" style="left:936px;top:429.5px;width:16px;height:16px"></div>
<div class="t" style="left:956.78px;top:429.00px;font-size:15.50px;line-height:17px;color:#fff;letter-spacing:-0.930px;">Freeze</div>
<div class="rd" style="left:1025.1px;top:429.5px;width:16px;height:16px"></div>
<div class="t" style="left:1045.98px;top:429.00px;font-size:15.50px;line-height:17px;color:#fff;letter-spacing:-0.294px;">Gradient</div>
<div class="t" style="left:941.68px;top:481.00px;font-size:15.50px;line-height:17px;color:#fff;letter-spacing:-0.312px;">Smoothing Level</div>
<div class="r" style="left:943.5px;top:506px;width:1px;height:4.5px;background:#9a9a9a;"></div>
<div class="r" style="left:960.5px;top:506px;width:1px;height:4.5px;background:#9a9a9a;"></div>
<div class="r" style="left:976.5px;top:506px;width:1px;height:4.5px;background:#9a9a9a;"></div>
<div class="r" style="left:992.5px;top:506px;width:1px;height:4.5px;background:#9a9a9a;"></div>
<div class="r" style="left:1009.5px;top:506px;width:1px;height:4.5px;background:#9a9a9a;"></div>
<div class="r" style="left:1025.5px;top:506px;width:1px;height:4.5px;background:#9a9a9a;"></div>
<div class="r" style="left:1041.5px;top:506px;width:1px;height:4.5px;background:#9a9a9a;"></div>
<div class="r" style="left:1058.5px;top:506px;width:1px;height:4.5px;background:#9a9a9a;"></div>
<div class="r" style="left:1074.5px;top:506px;width:1px;height:4.5px;background:#9a9a9a;"></div>
<div class="r" style="left:1090.5px;top:506px;width:1px;height:4.5px;background:#9a9a9a;"></div>
<div class="r" style="left:1107.5px;top:506px;width:1px;height:4.5px;background:#9a9a9a;"></div>
<div class="r" style="left:936px;top:517.5px;width:172px;height:3px;background:linear-gradient(#f2f2f2,#cfcfcf);border-radius:1.5px;"></div>
<div class="th" style="left:1018px;top:511.5px;width:16px;height:16px"></div>
<div class="t" style="left:941.68px;top:548.00px;font-size:15.50px;line-height:17px;color:#fff;letter-spacing:-0.274px;">Zoom X</div>
<div class="r" style="left:936px;top:579.5px;width:172px;height:3px;background:linear-gradient(#f2f2f2,#cfcfcf);border-radius:1.5px;"></div>
<div class="th" style="left:936.5px;top:573.5px;width:16px;height:16px"></div>
<div class="t" style="left:941.68px;top:611.00px;font-size:15.50px;line-height:17px;color:#fff;letter-spacing:-0.418px;">Zoom Y</div>
<div class="r" style="left:936px;top:642px;width:172px;height:3px;background:linear-gradient(#f2f2f2,#cfcfcf);border-radius:1.5px;"></div>
<div class="th" style="left:936.5px;top:636px;width:16px;height:16px"></div>
<div class="r" style="left:923px;top:660px;width:206px;height:28.3px;overflow:hidden">
<div class="t" style="left:18.70px;top:13px;font-size:15.5px;line-height:17px;color:#fff;letter-spacing:-0.55px">x-Axis</div>
</div>
<div class="r" style="left:1116px;top:417px;width:6px;height:206px;background:#a8a8a8;border-radius:3px;"></div>
<svg class="r" style="left:1130px;top:415px" width="758" height="273" viewBox="1130 415 758 273">
<rect x="1243.5" y="435" width="109.6" height="195" fill="#404040"/>
<path d="M1244 474.5H1846 M1244 513.5H1846 M1244 552.5H1846 M1244 591.5H1846 M1271.5 435V630 M1311.5 435V630 M1351.5 435V630 M1392.5 435V630 M1432.5 435V630 M1472.5 435V630 M1512.5 435V630 M1553.5 435V630 M1593.5 435V630 M1633.5 435V630 M1673.5 435V630 M1713.5 435V630 M1754.5 435V630 M1794.5 435V630 M1834.5 435V630" stroke="rgba(255,255,255,0.56)" stroke-width="1" fill="none"/>
<path d="M1354.5 435V630" stroke="#e0d848" stroke-width="1" stroke-dasharray="1.3 1.5"/>
<polyline points="1245.7,598.6 1246.6,603.1 1247.4,601.9 1248.2,606.5 1248.9,600.4 1249.5,595.3 1250.2,593.9 1250.8,585.8 1251.5,580.4 1252.2,584.3 1252.8,587.6 1253.5,588.3 1254.1,592.0 1254.8,593.0 1255.4,596.1 1256.1,599.1 1256.7,600.7 1257.4,603.5 1258.1,608.2 1258.7,604.8 1259.4,601.0 1260.0,596.8 1260.7,593.5 1261.3,588.7 1262.0,592.5 1262.7,596.1 1263.3,600.1 1264.0,600.5 1264.6,604.9 1265.5,604.5 1266.3,610.5 1266.9,603.3 1267.6,600.9 1268.2,601.4 1268.9,592.0 1269.6,592.4 1270.2,593.5 1270.9,593.4 1271.5,595.7 1272.2,596.8 1272.8,597.5 1273.7,597.0 1274.5,597.0 1275.3,598.2 1276.0,599.5 1276.6,603.7 1277.3,605.1 1277.9,610.8 1278.6,610.5 1279.2,608.0 1279.9,606.4 1280.6,602.7 1281.2,607.7 1281.9,601.2 1282.6,602.7 1283.3,602.9 1284.0,607.2 1284.7,601.6 1285.4,607.4 1286.1,604.9 1286.8,606.6 1287.5,603.9 1288.2,604.5 1288.9,599.9 1289.5,600.0 1290.2,599.1 1290.9,598.0 1291.6,594.8 1292.2,603.4 1292.9,604.4 1293.5,603.9 1294.2,606.9 1295.0,607.0 1295.8,611.7 1296.7,610.1 1297.3,607.0 1298.0,604.4 1298.6,601.8 1299.3,599.2 1299.9,596.4 1300.6,603.8 1301.3,600.5 1302.0,601.0 1302.7,610.4 1303.4,613.7 1304.0,617.6 1304.7,614.3 1305.4,611.6 1306.0,609.6 1306.7,607.9 1307.3,603.2 1308.0,601.4 1308.7,604.0 1309.4,600.2 1310.1,596.3 1310.7,600.6 1311.4,595.7 1312.1,596.7 1312.8,598.2 1313.5,603.1 1314.2,603.7 1314.8,605.8 1315.5,609.2 1316.2,610.1 1316.9,613.8 1317.6,612.2 1318.3,611.4 1319.0,615.9 1319.6,615.8 1320.5,612.0 1321.3,607.4 1322.1,600.1 1322.8,598.3 1323.4,596.8 1324.1,593.3 1324.7,594.7 1325.4,592.8 1326.0,591.8 1326.7,590.6 1327.4,590.0 1328.0,588.7 1328.7,589.0 1329.5,592.4 1330.3,595.2 1331.1,599.9 1331.8,589.3 1332.4,584.3 1333.1,575.6 1333.8,565.4 1334.4,557.7 1335.1,565.0 1335.7,572.8 1336.4,575.6 1337.0,581.9 1337.7,588.3 1338.4,590.9 1339.0,589.4 1339.7,593.8 1340.3,592.8 1341.0,595.0 1341.8,592.8 1342.6,590.7 1343.4,588.6 1344.3,590.2 1345.1,592.9 1345.9,595.6 1346.6,596.0 1347.2,594.7 1347.9,596.9 1348.5,598.2 1349.2,596.8 1350.0,593.7 1350.8,591.3 1351.7,590.0 1352.5,570.3 1353.3,548.7 1354.0,547.8 1354.6,544.9 1355.4,548.4 1356.3,554.9 1357.4,565.4 1358.2,562.4 1359.0,562.4 1359.9,574.7 1360.7,585.0 1361.5,586.5 1362.3,589.3 1363.2,588.4 1364.0,589.8 1364.8,590.2 1365.6,589.0 1366.3,589.1 1367.0,594.7 1367.7,595.4 1368.4,600.6 1369.0,603.4 1369.7,605.2 1370.5,598.9 1371.4,594.9 1372.0,597.3 1372.7,595.0 1373.3,598.1 1374.0,598.7 1374.6,598.4 1375.4,595.9 1376.2,585.2 1376.9,582.0 1377.7,568.2 1378.4,563.5 1379.2,575.8 1380.0,584.4 1380.8,592.0 1381.5,601.8 1382.3,594.9 1383.0,593.3 1383.8,589.0 1384.5,586.9 1385.2,585.9 1385.8,581.9 1386.5,579.8 1387.1,575.3 1387.8,573.6 1388.6,571.3 1389.4,567.9 1390.2,566.4 1391.0,549.4 1391.7,539.3 1392.4,520.8 1393.0,534.1 1393.7,541.9 1394.4,555.2 1395.2,561.5 1396.0,569.1 1396.8,576.0 1397.5,575.1 1398.1,575.1 1398.8,574.1 1399.4,580.2 1400.1,578.4 1400.9,584.1 1401.7,591.4 1402.6,598.9 1403.4,585.3 1404.2,579.0 1404.9,582.7 1405.6,588.8 1406.3,589.3 1406.9,596.2 1407.6,602.8 1408.3,606.8 1409.1,607.5 1410.0,602.3 1410.8,602.7 1411.4,599.8 1412.1,595.0 1412.7,592.3 1413.4,593.4 1414.1,589.6 1414.7,589.1 1415.4,591.2 1416.0,587.3 1416.7,589.7 1417.3,588.7 1418.0,587.7 1418.7,587.9 1419.3,586.5 1420.0,585.8 1420.6,584.7 1421.4,589.2 1422.3,586.8 1423.1,589.3 1423.7,595.5 1424.4,599.6 1425.1,607.3 1425.7,610.2 1426.4,618.1 1427.2,610.3 1428.0,605.1 1428.8,600.4 1429.7,605.4 1430.5,609.4 1431.3,612.2 1432.0,606.7 1432.6,600.8 1433.3,598.8 1433.9,593.8 1434.6,588.1 1435.2,583.9 1435.9,576.2 1436.6,567.8 1437.2,563.8 1437.9,555.9 1438.6,562.8 1439.3,572.5 1440.0,576.8 1440.7,587.1 1441.4,589.2 1442.1,597.3 1442.9,599.3 1443.6,605.2 1444.3,603.9 1445.0,607.2 1445.7,610.8 1446.3,611.3 1447.0,608.8 1447.7,613.9 1448.5,607.7 1449.4,598.4 1450.2,592.8 1450.8,585.2 1451.5,582.0 1452.2,579.1 1452.8,574.5 1453.5,568.1 1454.2,571.7 1454.9,576.8 1455.6,586.7 1456.4,589.8 1457.1,598.4 1457.8,590.2 1458.6,588.0 1459.3,581.4 1460.0,574.2 1460.7,578.3 1461.4,582.7 1462.1,586.5 1462.8,592.1 1463.5,596.2 1464.1,600.4 1464.9,590.9 1465.6,586.3 1466.3,575.0 1467.0,568.4 1467.8,558.3 1468.5,566.3 1469.3,575.3 1470.0,590.6 1470.8,598.2 1471.5,609.2 1472.2,604.1 1472.9,600.1 1473.6,593.2 1474.3,590.4 1474.9,585.1 1475.6,581.3 1476.3,577.8 1476.9,583.7 1477.6,583.3 1478.3,580.3 1478.9,583.3 1479.6,585.1 1480.2,587.4 1480.9,587.7 1481.5,591.4 1482.2,590.3 1482.9,591.9 1483.5,595.7 1484.2,601.4 1484.8,602.4 1485.5,607.2 1486.2,602.6 1486.9,596.0 1487.6,590.9 1488.3,583.0 1489.0,577.4 1489.7,570.5 1490.4,565.3 1491.2,567.1 1492.1,573.6 1492.7,577.0 1493.4,581.3 1494.0,588.9 1494.7,594.4 1495.3,598.3 1496.2,605.8 1497.0,610.0 1497.8,613.9 1498.5,608.5 1499.1,603.2 1499.8,602.9 1500.4,598.7 1501.1,594.9 1501.7,596.9 1502.4,600.2 1503.1,599.3 1503.7,602.8 1504.4,602.9 1505.0,598.2 1505.7,600.1 1506.3,602.1 1507.0,595.3 1507.7,597.5 1508.5,579.3 1509.3,563.4 1510.1,547.6 1510.9,562.8 1511.8,575.5 1512.6,592.0 1513.2,590.7 1513.9,589.4 1514.5,584.8 1515.2,586.7 1515.9,583.2 1516.5,584.2 1517.2,575.9 1517.8,576.5 1518.5,571.1 1519.1,572.5 1519.8,562.2 1520.5,548.4 1521.1,538.5 1521.8,552.9 1522.5,566.7 1523.3,578.3 1523.9,579.2 1524.6,576.2 1525.3,580.1 1526.0,582.4 1526.7,583.2 1527.4,584.7 1528.0,584.3 1528.7,584.8 1529.4,591.9 1530.1,592.6 1530.8,596.5 1531.5,599.0 1532.2,601.5 1532.9,605.0 1533.6,606.8 1534.3,603.7 1535.0,608.4 1535.7,613.9 1536.4,612.2 1537.0,610.0 1537.7,604.2 1538.4,599.4 1539.0,598.7 1539.7,592.6 1540.3,586.3 1541.0,583.0 1541.6,574.0 1542.3,569.7 1543.0,566.2 1543.7,572.0 1544.4,576.5 1545.2,585.3 1545.9,591.4 1546.7,599.3 1547.4,604.0 1548.2,597.0 1549.0,590.6 1549.9,585.3 1550.5,582.0 1551.2,581.9 1551.8,577.3 1552.5,583.0 1553.2,585.8 1554.0,589.3 1554.8,590.8 1555.6,588.4 1556.4,588.8 1557.2,589.7 1558.1,595.6 1558.9,601.0 1559.7,594.0 1560.5,588.9 1561.3,586.9 1562.1,586.8 1562.8,583.3 1563.6,577.2 1564.3,574.4 1565.0,578.4 1565.7,580.9 1566.4,586.5 1567.1,590.1 1567.8,589.4 1568.4,592.6 1569.1,594.8 1569.7,595.4 1570.4,597.9 1571.0,602.7 1571.7,607.0 1572.3,605.9 1573.0,608.3 1573.7,612.0 1574.3,611.8 1575.0,611.3 1575.6,615.5 1576.3,611.9 1576.9,613.7 1577.6,610.5 1578.3,607.7 1578.9,606.3 1579.6,605.2 1580.2,602.7 1580.9,602.4 1581.5,600.9 1582.2,598.2 1582.9,599.7 1583.5,598.8 1584.2,599.3 1584.8,601.3 1585.5,600.2 1586.1,599.6 1586.8,599.7 1587.5,597.9 1588.3,595.8 1589.0,591.8 1589.8,590.8 1590.5,594.5 1591.1,592.0 1591.8,595.9 1592.5,597.8 1593.2,603.1 1593.9,603.4 1594.6,605.1 1595.3,606.9 1596.0,608.6 1596.7,610.2 1597.5,607.9 1598.3,611.5 1599.1,612.0 1599.8,606.8 1600.5,608.1 1601.2,605.4 1601.9,599.2 1602.5,598.5 1603.2,596.7 1603.9,597.6 1604.5,600.8 1605.2,599.6 1605.8,603.1 1606.5,605.2 1607.2,608.9 1607.8,610.4 1608.5,612.6 1609.1,616.8 1609.8,617.0 1610.4,615.9 1611.1,609.8 1611.8,604.3 1612.4,601.7 1613.1,597.4 1613.8,592.0 1614.5,591.9 1615.2,589.0 1615.9,593.7 1616.5,594.0 1617.2,597.7 1617.9,602.2 1618.7,612.1 1619.4,614.6 1620.1,619.5 1620.8,613.3 1621.5,608.1 1622.2,604.8 1622.9,600.4 1623.6,598.8 1624.3,595.5 1625.1,590.5 1625.7,593.0 1626.4,596.5 1627.0,600.4 1627.8,594.1 1628.7,590.5 1629.5,583.5 1630.2,589.3 1630.9,591.3 1631.5,600.0 1632.2,604.0 1632.9,608.4 1633.6,613.5 1634.3,605.2 1634.9,603.8 1635.6,599.0 1636.2,599.3 1636.9,591.8 1637.7,594.4 1638.5,600.0 1639.3,601.2 1640.2,601.5 1641.0,595.1 1641.8,593.6 1642.5,595.0 1643.1,600.9 1643.8,598.8 1644.4,606.6 1645.1,607.9 1645.7,606.8 1646.4,603.1 1647.1,603.8 1647.7,602.1 1648.4,600.5 1649.1,602.3 1649.7,604.5 1650.4,606.8 1651.1,606.1 1651.8,606.4 1652.5,609.2 1653.3,607.9 1654.1,602.8 1654.9,600.8 1655.6,601.4 1656.3,600.7 1656.9,605.2 1657.6,608.1 1658.2,605.8 1658.9,604.7 1659.6,605.3 1660.3,608.7 1661.0,606.6 1661.6,607.3 1662.3,608.8 1663.0,605.9 1663.7,603.6 1664.4,600.1 1665.1,598.1 1665.9,606.2 1666.8,613.4 1667.5,610.2 1668.2,604.2 1669.0,601.6 1669.7,597.2 1670.4,596.4 1671.0,596.5 1671.7,596.6 1672.3,594.6 1673.0,593.6 1673.8,594.7 1674.6,599.6 1675.5,601.8 1676.2,597.2 1676.9,592.2 1677.6,589.8 1678.3,599.1 1679.0,600.7 1679.8,605.4 1680.5,611.3 1681.2,615.4 1681.9,613.1 1682.6,608.9 1683.3,606.1 1684.0,604.7 1684.6,601.8 1685.3,598.5 1686.0,599.6 1686.7,603.9 1687.4,604.1 1688.1,609.7 1688.7,610.2 1689.4,613.3 1690.2,611.4 1691.1,607.7 1691.9,602.7 1692.6,608.8 1693.3,615.6 1694.0,618.8 1694.7,625.0 1695.4,620.2 1696.2,614.0 1696.9,608.7 1697.6,601.9 1698.4,598.1 1699.1,594.4 1699.9,592.4 1700.6,586.5 1701.3,587.7 1702.0,586.8 1702.7,590.0 1703.4,588.6 1704.0,591.6 1704.7,588.4 1705.4,594.0 1706.0,595.1 1706.7,596.6 1707.3,600.2 1708.0,599.9 1708.6,600.1 1709.3,600.6 1710.0,603.8 1710.6,600.5 1711.3,596.9 1712.0,591.1 1712.7,591.2 1713.4,586.5 1714.1,581.9 1714.7,584.2 1715.4,583.9 1716.0,590.1 1716.7,589.4 1717.3,594.1 1718.0,594.8 1718.7,596.5 1719.3,600.1 1720.0,601.8 1720.6,602.8 1721.3,603.8 1721.9,605.5 1722.6,604.5 1723.3,603.1 1723.9,605.8 1724.7,602.1 1725.6,600.6 1726.4,599.4 1727.2,602.3 1728.0,605.0 1728.8,607.4 1729.6,606.1 1730.3,602.3 1731.1,599.1 1731.8,597.0 1732.5,604.7 1733.2,603.9 1734.0,608.0 1734.7,616.6 1735.4,619.4 1736.1,617.8 1736.7,609.7 1737.4,606.2 1738.0,604.2 1738.7,599.1 1739.4,596.7 1740.1,594.1 1740.7,590.5 1741.4,587.4 1742.1,585.2 1742.8,583.7 1743.6,588.8 1744.4,592.3 1745.3,597.1 1745.9,595.3 1746.6,592.9 1747.3,587.6 1748.0,584.7 1748.7,582.4 1749.4,580.4 1750.0,581.9 1750.7,586.2 1751.3,584.1 1752.0,590.8 1752.6,591.1 1753.5,599.2 1754.3,609.6 1754.9,607.1 1755.6,605.1 1756.3,602.8 1756.9,599.9 1757.6,596.6 1758.4,600.7 1759.2,596.5 1760.0,595.6 1760.7,601.3 1761.3,602.1 1762.0,604.1 1762.7,606.3 1763.3,609.5 1764.0,604.2 1764.7,602.1 1765.4,601.6 1766.1,595.6 1766.7,595.4 1767.4,595.1 1768.1,592.7 1768.8,592.8 1769.5,592.7 1770.2,588.6 1770.8,590.1 1771.5,588.3 1772.3,592.3 1773.2,599.2 1774.0,605.1 1774.7,601.4 1775.4,598.0 1776.0,597.7 1776.7,595.0 1777.4,591.0 1778.1,587.0 1778.8,584.2 1779.4,583.5 1780.1,583.1 1780.7,587.7 1781.4,592.6 1782.0,596.2 1782.7,598.2 1783.3,601.3 1784.0,605.9 1784.7,609.3 1785.4,606.8 1786.1,604.9 1786.8,597.8 1787.5,599.1 1788.2,588.7 1788.9,585.8 1789.6,584.5 1790.3,586.9 1791.0,591.6 1791.6,598.7 1792.3,597.3 1793.0,603.7 1793.7,604.9 1794.5,607.0 1795.3,606.7 1796.2,611.4 1797.0,605.6 1797.8,600.2 1798.6,598.2 1799.3,601.0 1799.9,605.2 1800.6,608.0 1801.2,610.7 1801.9,613.5 1802.6,619.4 1803.2,626.2 1803.9,627.5 1804.6,621.4 1805.4,618.0 1806.1,609.1 1806.8,605.9 1807.5,604.1 1808.1,601.7 1808.8,603.3 1809.5,602.0 1810.1,600.0 1810.9,604.9 1811.8,610.6 1812.6,614.1 1813.2,607.6 1813.9,600.3 1814.5,603.9 1815.2,595.8 1815.9,591.7 1816.5,592.3 1817.2,590.6 1817.8,592.7 1818.5,588.5 1819.1,590.2 1820.0,595.9 1820.8,608.2 1821.6,613.2 1822.3,612.2 1822.9,609.7 1823.6,602.4 1824.2,601.1 1824.9,598.9 1825.7,596.7 1826.5,594.5 1827.4,593.3 1828.0,598.1 1828.7,599.3 1829.3,603.9 1830.0,609.0 1830.6,611.8 1831.5,607.5 1832.3,601.0 1833.1,599.6 1833.9,604.7 1834.7,612.1 1835.6,618.2 1836.3,616.9 1837.0,615.7 1837.7,612.6 1838.4,613.2 1839.1,613.2 1839.8,610.5 1840.5,608.8 1841.3,603.7 1842.1,597.5 1843.0,592.0" fill="none" stroke="#f2f2f2" stroke-width="1.45" stroke-linejoin="round"/>
<path d="M1243.1 435.2H1846.1" stroke="#8c8c8c" stroke-width="2"/>
<path d="M1243.1 630H1846.1" stroke="#8c8c8c" stroke-width="2"/>
<path d="M1243.7 434.2V631" stroke="#8c8c8c" stroke-width="1.2"/>
<path d="M1845.1 434.2V631" stroke="#8c8c8c" stroke-width="2"/>
<circle cx="1355" cy="539.6" r="4.9" fill="#e01010"/>
<circle cx="1392.5" cy="515.5" r="4.9" fill="#f4f020"/>
<circle cx="1510" cy="547" r="4.9" fill="#8428d8"/>
<circle cx="1521" cy="539" r="4.9" fill="#10a0e0"/>
</svg>
<div class="t" style="right:655.20px;top:425.00px;font-size:16.90px;line-height:19px;color:#fff;letter-spacing:0.000px;">-10.0</div>
<div class="t" style="right:655.20px;top:464.00px;font-size:16.90px;line-height:19px;color:#fff;letter-spacing:0.000px;">-20.0</div>
<div class="t" style="right:655.20px;top:503.00px;font-size:16.90px;line-height:19px;color:#fff;letter-spacing:0.000px;">-30.0</div>
<div class="t" style="right:655.20px;top:542.00px;font-size:16.90px;line-height:19px;color:#fff;letter-spacing:0.000px;">-40.0</div>
<div class="t" style="right:655.20px;top:581.00px;font-size:16.90px;line-height:19px;color:#fff;letter-spacing:0.000px;">-50.0</div>
<div class="t" style="right:655.20px;top:620.00px;font-size:16.90px;line-height:19px;color:#fff;letter-spacing:0.000px;">-60.0</div>
<div class="t" style="left:1270.44px;width:400px;margin-left:-200px;text-align:center;top:636.00px;font-size:13.60px;line-height:15px;color:#fff;letter-spacing:0.000px;letter-spacing:-0.35px;">-60</div>
<div class="t" style="left:1310.66px;width:400px;margin-left:-200px;text-align:center;top:636.00px;font-size:13.60px;line-height:15px;color:#fff;letter-spacing:0.000px;letter-spacing:-0.35px;">-40</div>
<div class="t" style="left:1350.88px;width:400px;margin-left:-200px;text-align:center;top:636.00px;font-size:13.60px;line-height:15px;color:#fff;letter-spacing:0.000px;letter-spacing:-0.35px;">-20</div>
<div class="t" style="left:1392.60px;width:400px;margin-left:-200px;text-align:center;top:636.00px;font-size:13.60px;line-height:15px;color:#fff;letter-spacing:0.000px;letter-spacing:-0.35px;">0</div>
<div class="t" style="left:1432.82px;width:400px;margin-left:-200px;text-align:center;top:636.00px;font-size:13.60px;line-height:15px;color:#fff;letter-spacing:0.000px;letter-spacing:-0.35px;">20</div>
<div class="t" style="left:1473.04px;width:400px;margin-left:-200px;text-align:center;top:636.00px;font-size:13.60px;line-height:15px;color:#fff;letter-spacing:0.000px;letter-spacing:-0.35px;">40</div>
<div class="t" style="left:1513.26px;width:400px;margin-left:-200px;text-align:center;top:636.00px;font-size:13.60px;line-height:15px;color:#fff;letter-spacing:0.000px;letter-spacing:-0.35px;">60</div>
<div class="t" style="left:1553.48px;width:400px;margin-left:-200px;text-align:center;top:636.00px;font-size:13.60px;line-height:15px;color:#fff;letter-spacing:0.000px;letter-spacing:-0.35px;">80</div>
<div class="t" style="left:1593.70px;width:400px;margin-left:-200px;text-align:center;top:636.00px;font-size:13.60px;line-height:15px;color:#fff;letter-spacing:0.000px;letter-spacing:-0.35px;">100</div>
<div class="t" style="left:1633.92px;width:400px;margin-left:-200px;text-align:center;top:636.00px;font-size:13.60px;line-height:15px;color:#fff;letter-spacing:0.000px;letter-spacing:-0.35px;">120</div>
<div class="t" style="left:1674.14px;width:400px;margin-left:-200px;text-align:center;top:636.00px;font-size:13.60px;line-height:15px;color:#fff;letter-spacing:0.000px;letter-spacing:-0.35px;">140</div>
<div class="t" style="left:1714.36px;width:400px;margin-left:-200px;text-align:center;top:636.00px;font-size:13.60px;line-height:15px;color:#fff;letter-spacing:0.000px;letter-spacing:-0.35px;">160</div>
<div class="t" style="left:1754.58px;width:400px;margin-left:-200px;text-align:center;top:636.00px;font-size:13.60px;line-height:15px;color:#fff;letter-spacing:0.000px;letter-spacing:-0.35px;">180</div>
<div class="t" style="left:1794.80px;width:400px;margin-left:-200px;text-align:center;top:636.00px;font-size:13.60px;line-height:15px;color:#fff;letter-spacing:0.000px;letter-spacing:-0.35px;">200</div>
<div class="t" style="left:1832.52px;width:400px;margin-left:-200px;text-align:center;top:636.00px;font-size:13.60px;line-height:15px;color:#fff;letter-spacing:0.000px;letter-spacing:-0.35px;">220</div>
<div class="t" style="left:1544.00px;width:400px;margin-left:-200px;text-align:center;top:657.00px;font-size:17.10px;line-height:19px;color:#fff;letter-spacing:0.000px;">Distance Difference (km)</div>
<div class="t" style="left:1170px;top:533px;width:200px;margin-left:-100px;margin-top:-10px;height:20px;line-height:20px;text-align:center;font-size:15.5px;font-weight:bold;color:#fff;transform:rotate(-90deg)">Magnitude (dB)</div>
<div class="r" style="left:923px;top:688.3px;width:965px;height:6.7px;background:#85878a;"></div>
<div class="r" style="left:923px;top:695px;width:965px;height:25px;background:#0e2e53;"></div>
<div class="r" style="left:923px;top:720px;width:965px;height:243.3px;background:#000;"></div>
<div class="r" style="left:923px;top:963.3px;width:965px;height:6px;background:#85878a;"></div>
<div class="t" style="left:1365.29px;top:697.00px;font-size:17.80px;line-height:20px;color:#fff;letter-spacing:0.054px;">TII Carriers</div>
<svg class="r" style="left:1850px;top:699.4px" width="38" height="20" viewBox="0 0 38 20"><path d="M4 1.2H19.4L11.7 14.4Z" fill="none" stroke="#dfe8f5" stroke-width="1.1"/><path d="M27.5 1L42 15.5M42 1L27.5 15.5" stroke="#d9531e" stroke-width="3" fill="none"/></svg>
<svg class="r" style="left:923px;top:720px" width="965" height="243" viewBox="923 720 965 243">
<rect x="1041" y="897" width="797" height="7" fill="#484848"/>
<path d="M1041 902.3H1140M1739 902.3H1838" stroke="#b0b0b0" stroke-width="1.5"/>
<path d="M1041 871.5H1838 M1041 838.5H1838 M1041 805.5H1838 M1041 772.5H1838 M1090.5 739V904 M1168.5 739V904 M1245.5 739V904 M1323.5 739V904 M1401.5 739V904 M1478.5 739V904 M1556.5 739V904 M1634.5 739V904 M1711.5 739V904 M1789.5 739V904" stroke="rgba(255,255,255,0.56)" stroke-width="1" fill="none"/>
<path d="M1205.0 904V861.2" stroke="#f4f4f4" stroke-width="1.7" opacity="1.00"/>
<path d="M1224.0 904V806.6" stroke="#f4f4f4" stroke-width="1.7" opacity="1.00"/>
<path d="M1261.4 904V781.7" stroke="#f4f4f4" stroke-width="1.7" opacity="1.00"/>
<path d="M1262.6 904V854.6" stroke="#f4f4f4" stroke-width="1.7" opacity="1.00"/>
<path d="M1279.9 904V738.7" stroke="#f4f4f4" stroke-width="1.7" opacity="1.00"/>
<path d="M1354.6 904V781.7" stroke="#f4f4f4" stroke-width="1.7" opacity="1.00"/>
<path d="M1373.0 904V763.5" stroke="#f4f4f4" stroke-width="1.7" opacity="1.00"/>
<path d="M1373.9 904V877.7" stroke="#f4f4f4" stroke-width="1.3" opacity="0.75"/>
<path d="M1410.5 904V799.4" stroke="#f4f4f4" stroke-width="1.7" opacity="1.00"/>
<path d="M1428.7 904V758.6" stroke="#f4f4f4" stroke-width="1.7" opacity="1.00"/>
<path d="M1429.6 904V859.5" stroke="#f4f4f4" stroke-width="1.7" opacity="1.00"/>
<path d="M1504.0 904V781.7" stroke="#f4f4f4" stroke-width="1.7" opacity="1.00"/>
<path d="M1522.5 904V773.5" stroke="#f4f4f4" stroke-width="1.7" opacity="1.00"/>
<path d="M1545.0 904V880.2" stroke="#f4f4f4" stroke-width="1.3" opacity="0.75"/>
<path d="M1559.7 904V816.5" stroke="#f4f4f4" stroke-width="1.7" opacity="1.00"/>
<path d="M1578.8 904V786.7" stroke="#f4f4f4" stroke-width="1.7" opacity="1.00"/>
<path d="M1653.0 904V786.7" stroke="#f4f4f4" stroke-width="1.7" opacity="1.00"/>
<path d="M1672.0 904V738.7" stroke="#f4f4f4" stroke-width="1.7" opacity="1.00"/>
<path d="M1685.8 904V880.2" stroke="#f4f4f4" stroke-width="1.3" opacity="0.75"/>
<path d="M1709.0 904V828.1" stroke="#f4f4f4" stroke-width="1.7" opacity="1.00"/>
<path d="M1728.0 904V814.8" stroke="#f4f4f4" stroke-width="1.7" opacity="1.00"/>
<path d="M1731.2 904V876.1" stroke="#f4f4f4" stroke-width="1.3" opacity="0.75"/>
<path d="M1200.0 904V897.6" stroke="#f4f4f4" stroke-width="1.3" opacity="0.75"/>
<path d="M1259.0 904V897.6" stroke="#f4f4f4" stroke-width="1.3" opacity="0.75"/>
<path d="M1329.5 904V899.2" stroke="#f4f4f4" stroke-width="1.3" opacity="0.75"/>
<path d="M1343.0 904V898.4" stroke="#f4f4f4" stroke-width="1.3" opacity="0.75"/>
<path d="M1350.0 904V897.6" stroke="#f4f4f4" stroke-width="1.3" opacity="0.75"/>
<path d="M1407.5 904V897.6" stroke="#f4f4f4" stroke-width="1.3" opacity="0.75"/>
<path d="M1426.5 904V897.6" stroke="#f4f4f4" stroke-width="1.3" opacity="0.75"/>
<path d="M1489.5 904V900.9" stroke="#f4f4f4" stroke-width="1.3" opacity="0.75"/>
<path d="M1651.0 904V889.3" stroke="#f4f4f4" stroke-width="1.3" opacity="0.75"/>
<path d="M1710.5 904V895.9" stroke="#f4f4f4" stroke-width="1.3" opacity="0.75"/>
<path d="M1141.6 739V904" stroke="#e6e020" stroke-width="2" stroke-dasharray="1.9 1.9"/>
<path d="M1290.4 739V904" stroke="#e6e020" stroke-width="2" stroke-dasharray="1.9 1.9"/>
<path d="M1440.7 739V904" stroke="#e6e020" stroke-width="2" stroke-dasharray="1.9 1.9"/>
<path d="M1589.3 739V904" stroke="#e6e020" stroke-width="2" stroke-dasharray="1.9 1.9"/>
<path d="M1739.7 739V904" stroke="#e6e020" stroke-width="2" stroke-dasharray="1.9 1.9"/>
<path d="M1040.6 738.8H1839.2" stroke="#8c8c8c" stroke-width="2"/>
<path d="M1040.6 904.2H1839.2" stroke="#8c8c8c" stroke-width="2"/>
<path d="M1041.2 737.8V905.2" stroke="#8c8c8c" stroke-width="1.2"/>
<path d="M1838.2 737.8V905.2" stroke="#8c8c8c" stroke-width="2"/>
</svg>
<div class="t" style="right:858.50px;top:895.00px;font-size:17.00px;line-height:19px;color:#fff;letter-spacing:0.000px;">0.0</div>
<div class="t" style="right:858.50px;top:862.00px;font-size:17.00px;line-height:19px;color:#fff;letter-spacing:0.000px;">0.2</div>
<div class="t" style="right:858.50px;top:829.00px;font-size:17.00px;line-height:19px;color:#fff;letter-spacing:0.000px;">0.4</div>
<div class="t" style="right:858.50px;top:796.00px;font-size:17.00px;line-height:19px;color:#fff;letter-spacing:0.000px;">0.6</div>
<div class="t" style="right:858.50px;top:763.00px;font-size:17.00px;line-height:19px;color:#fff;letter-spacing:0.000px;">0.8</div>
<div class="t" style="right:858.50px;top:730.00px;font-size:17.00px;line-height:19px;color:#fff;letter-spacing:0.000px;">1.0</div>
<div class="t" style="left:1089.70px;width:400px;margin-left:-200px;text-align:center;top:909.00px;font-size:17.00px;line-height:19px;color:#fff;letter-spacing:0.000px;">-900</div>
<div class="t" style="left:1167.40px;width:400px;margin-left:-200px;text-align:center;top:909.00px;font-size:17.00px;line-height:19px;color:#fff;letter-spacing:0.000px;">-700</div>
<div class="t" style="left:1245.10px;width:400px;margin-left:-200px;text-align:center;top:909.00px;font-size:17.00px;line-height:19px;color:#fff;letter-spacing:0.000px;">-500</div>
<div class="t" style="left:1322.80px;width:400px;margin-left:-200px;text-align:center;top:909.00px;font-size:17.00px;line-height:19px;color:#fff;letter-spacing:0.000px;">-300</div>
<div class="t" style="left:1400.50px;width:400px;margin-left:-200px;text-align:center;top:909.00px;font-size:17.00px;line-height:19px;color:#fff;letter-spacing:0.000px;">-100</div>
<div class="t" style="left:1478.80px;width:400px;margin-left:-200px;text-align:center;top:909.00px;font-size:17.00px;line-height:19px;color:#fff;letter-spacing:0.000px;">100</div>
<div class="t" style="left:1556.50px;width:400px;margin-left:-200px;text-align:center;top:909.00px;font-size:17.00px;line-height:19px;color:#fff;letter-spacing:0.000px;">300</div>
<div class="t" style="left:1634.20px;width:400px;margin-left:-200px;text-align:center;top:909.00px;font-size:17.00px;line-height:19px;color:#fff;letter-spacing:0.000px;">500</div>
<div class="t" style="left:1711.90px;width:400px;margin-left:-200px;text-align:center;top:909.00px;font-size:17.00px;line-height:19px;color:#fff;letter-spacing:0.000px;">700</div>
<div class="t" style="left:1789.60px;width:400px;margin-left:-200px;text-align:center;top:909.00px;font-size:17.00px;line-height:19px;color:#fff;letter-spacing:0.000px;">900</div>
<div class="t" style="left:1439.50px;width:400px;margin-left:-200px;text-align:center;top:933.00px;font-size:16.80px;line-height:19px;color:#fff;letter-spacing:0.000px;">TII Subcarrier</div>
<div class="t" style="left:971px;top:821px;width:200px;margin-left:-100px;margin-top:-10px;height:20px;line-height:20px;text-align:center;font-size:15px;font-weight:bold;color:#fff;transform:rotate(-90deg)">Magnitude</div>
</div></body></html>
